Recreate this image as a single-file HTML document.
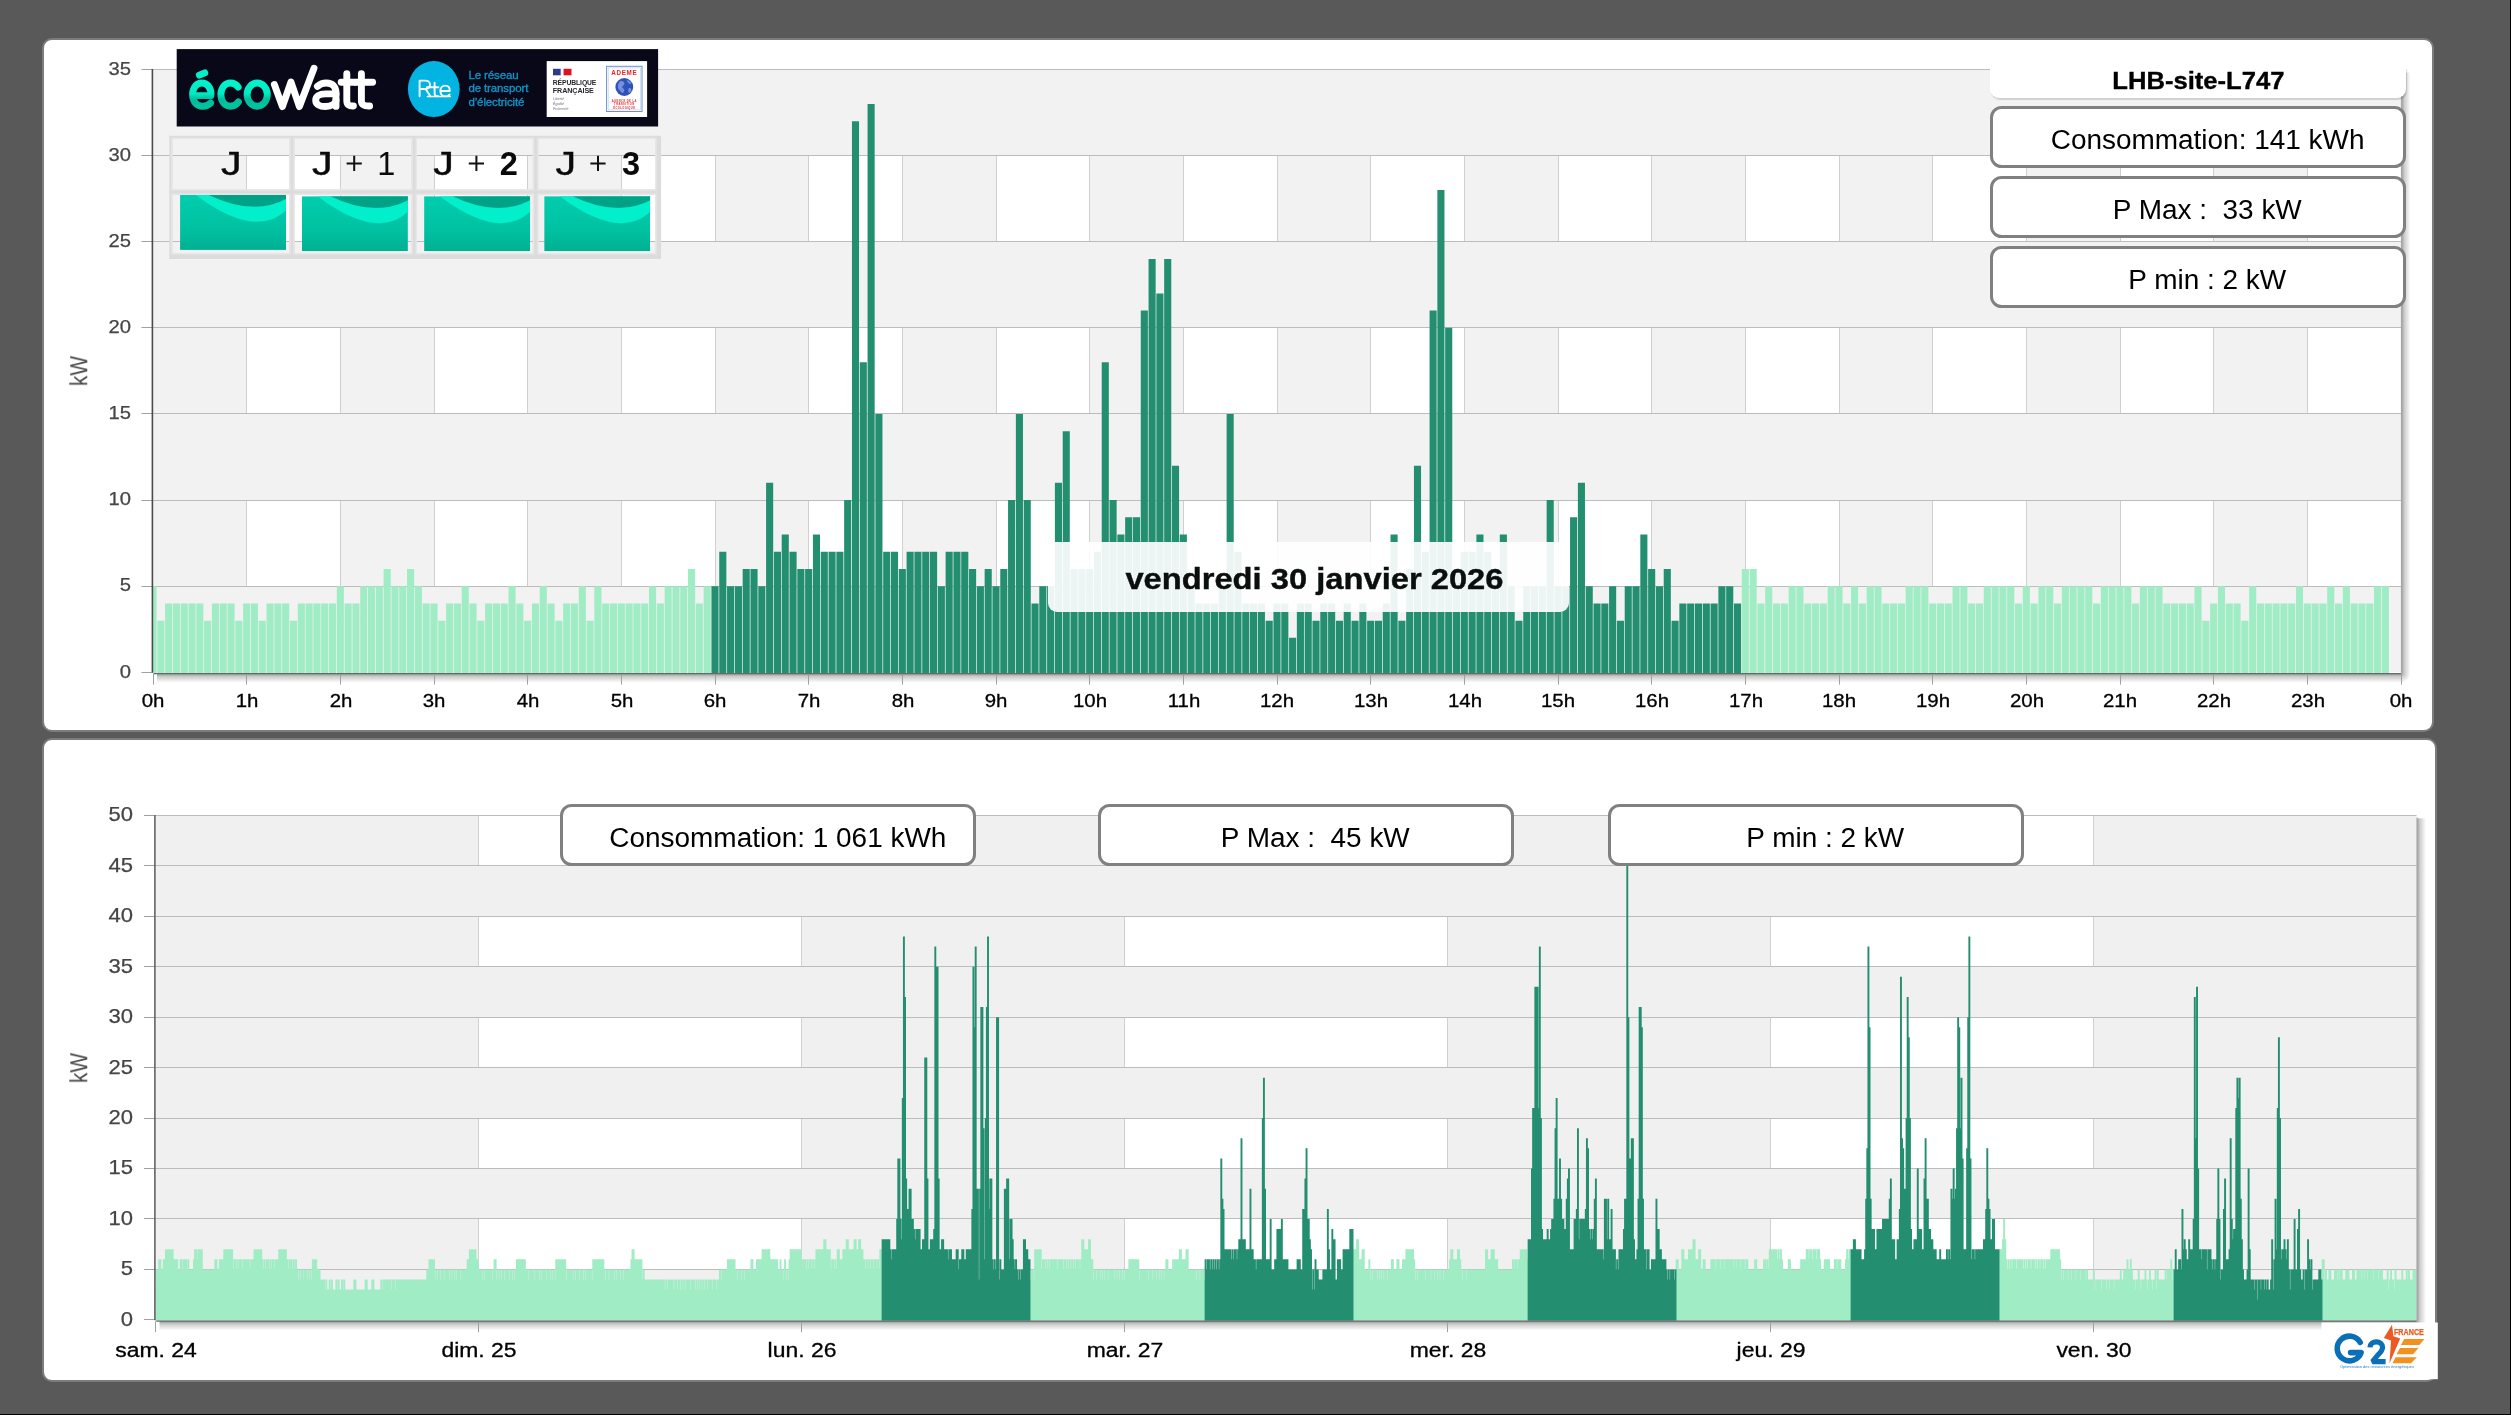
<!DOCTYPE html>
<html lang="fr"><head><meta charset="utf-8"><title>Consommation - LHB-site-L747</title>
<style>
html,body{margin:0;padding:0}
body{width:2511px;height:1415px;background:#595959;position:relative;overflow:hidden;font-family:"Liberation Sans", sans-serif}
.panel{position:absolute;background:#fff;border:2px solid #7c7c7c;border-radius:10px;box-sizing:border-box}
#p1{left:42px;top:37.7px;width:2391.9px;height:694px}
#p2{left:42px;top:737.8px;width:2395.3px;height:644.2px}
svg#c{position:absolute;left:0;top:0;will-change:transform}
.t{position:absolute;white-space:nowrap;line-height:1;font-family:"Liberation Sans", sans-serif;will-change:transform}
.box span,#title span,#date span{will-change:transform}
.box{position:absolute;box-sizing:border-box;border:3.4px solid #808080;border-radius:11.5px;background:#fff;width:416px;height:62px;
 font-size:27px;line-height:62px;text-align:center;color:#000;white-space:nowrap;padding-left:19px}
.box span{display:inline-block;transform:scaleX(1.035)}
#title{position:absolute;left:1990px;top:67.5px;width:416.3px;height:30px;background:#fff;border-radius:0 0 9px 9px;box-shadow:1px 1.2px 1.2px rgba(0,0,0,.14);
 font-weight:bold;font-size:24.5px;line-height:25px;text-align:center;color:#000}
#title span{display:inline-block;transform:scaleX(1.045);-webkit-text-stroke:.35px #000}
#date{position:absolute;left:1048px;top:542px;width:521px;height:70px;background:rgba(255,255,255,.915);border-radius:0 0 9px 9px;
 font-weight:bold;font-size:30px;line-height:73px;text-align:center;color:#0a0f0e;box-sizing:border-box;padding-left:11px}
#date span{display:inline-block;transform:scaleX(1.09);-webkit-text-stroke:.4px #0a0f0e}
#edge-r{position:absolute;right:0;top:0;width:1px;height:100%;background:#000}
#edge-b{position:absolute;left:0;bottom:0;width:100%;height:1px;background:#000}
#g2e{position:absolute;left:2321.5px;top:1322.5px;width:116.3px;height:56.7px;background:#fff}
</style></head><body>
<div class="panel" id="p1"></div>
<div class="panel" id="p2"></div>
<svg id="c" width="2511" height="1415" viewBox="0 0 2511 1415">
<defs><linearGradient id="shR" x1="0" x2="1" y1="0" y2="0"><stop offset="0" stop-color="#000" stop-opacity=".42"/><stop offset=".35" stop-color="#000" stop-opacity=".2"/><stop offset="1" stop-color="#000" stop-opacity="0"/></linearGradient><linearGradient id="shB" x1="0" x2="0" y1="0" y2="1"><stop offset="0" stop-color="#000" stop-opacity=".42"/><stop offset=".35" stop-color="#000" stop-opacity=".2"/><stop offset="1" stop-color="#000" stop-opacity="0"/></linearGradient><linearGradient id="eco" x1="0" x2="0" y1="0" y2="1"><stop offset="0" stop-color="#02f2cb"/><stop offset=".45" stop-color="#00ebc4"/><stop offset=".7" stop-color="#00bd9b"/><stop offset="1" stop-color="#00c4a0"/></linearGradient><linearGradient id="wave" x1="0" x2="0" y1="0" y2="1"><stop offset="0" stop-color="#00cdae"/><stop offset=".6" stop-color="#00c2a2"/><stop offset="1" stop-color="#00b092"/></linearGradient><radialGradient id="shC" cx="0" cy="0" r="1"><stop offset="0" stop-color="#000" stop-opacity=".42"/><stop offset=".35" stop-color="#000" stop-opacity=".2"/><stop offset="1" stop-color="#000" stop-opacity="0"/></radialGradient><clipPath id="cw"><rect x="0" y="0" width="106" height="55"/></clipPath></defs>
<rect x="2401" y="72.5" width="9.5" height="600.8" fill="url(#shR)"/>
<rect x="157" y="673.3" width="2244" height="9.5" fill="url(#shB)"/>
<path d="M2401 673.3h9.5v9.5h-9.5z" fill="url(#shC)"/>
<rect x="153" y="69.5" width="2248" height="602.8" fill="#fff"/>
<rect x="153" y="69.5" width="2248" height="86.11" fill="#f2f2f2"/>
<rect x="153" y="155.61" width="93.67" height="86.11" fill="#f2f2f2"/>
<rect x="340.33" y="155.61" width="93.67" height="86.11" fill="#f2f2f2"/>
<rect x="527.67" y="155.61" width="93.67" height="86.11" fill="#f2f2f2"/>
<rect x="715" y="155.61" width="93.67" height="86.11" fill="#f2f2f2"/>
<rect x="902.33" y="155.61" width="93.67" height="86.11" fill="#f2f2f2"/>
<rect x="1089.67" y="155.61" width="93.67" height="86.11" fill="#f2f2f2"/>
<rect x="1277" y="155.61" width="93.67" height="86.11" fill="#f2f2f2"/>
<rect x="1464.33" y="155.61" width="93.67" height="86.11" fill="#f2f2f2"/>
<rect x="1651.67" y="155.61" width="93.67" height="86.11" fill="#f2f2f2"/>
<rect x="1839" y="155.61" width="93.67" height="86.11" fill="#f2f2f2"/>
<rect x="2026.33" y="155.61" width="93.67" height="86.11" fill="#f2f2f2"/>
<rect x="2213.67" y="155.61" width="93.67" height="86.11" fill="#f2f2f2"/>
<rect x="153" y="241.73" width="2248" height="86.11" fill="#f2f2f2"/>
<rect x="153" y="327.84" width="93.67" height="86.11" fill="#f2f2f2"/>
<rect x="340.33" y="327.84" width="93.67" height="86.11" fill="#f2f2f2"/>
<rect x="527.67" y="327.84" width="93.67" height="86.11" fill="#f2f2f2"/>
<rect x="715" y="327.84" width="93.67" height="86.11" fill="#f2f2f2"/>
<rect x="902.33" y="327.84" width="93.67" height="86.11" fill="#f2f2f2"/>
<rect x="1089.67" y="327.84" width="93.67" height="86.11" fill="#f2f2f2"/>
<rect x="1277" y="327.84" width="93.67" height="86.11" fill="#f2f2f2"/>
<rect x="1464.33" y="327.84" width="93.67" height="86.11" fill="#f2f2f2"/>
<rect x="1651.67" y="327.84" width="93.67" height="86.11" fill="#f2f2f2"/>
<rect x="1839" y="327.84" width="93.67" height="86.11" fill="#f2f2f2"/>
<rect x="2026.33" y="327.84" width="93.67" height="86.11" fill="#f2f2f2"/>
<rect x="2213.67" y="327.84" width="93.67" height="86.11" fill="#f2f2f2"/>
<rect x="153" y="413.96" width="2248" height="86.11" fill="#f2f2f2"/>
<rect x="153" y="500.07" width="93.67" height="86.11" fill="#f2f2f2"/>
<rect x="340.33" y="500.07" width="93.67" height="86.11" fill="#f2f2f2"/>
<rect x="527.67" y="500.07" width="93.67" height="86.11" fill="#f2f2f2"/>
<rect x="715" y="500.07" width="93.67" height="86.11" fill="#f2f2f2"/>
<rect x="902.33" y="500.07" width="93.67" height="86.11" fill="#f2f2f2"/>
<rect x="1089.67" y="500.07" width="93.67" height="86.11" fill="#f2f2f2"/>
<rect x="1277" y="500.07" width="93.67" height="86.11" fill="#f2f2f2"/>
<rect x="1464.33" y="500.07" width="93.67" height="86.11" fill="#f2f2f2"/>
<rect x="1651.67" y="500.07" width="93.67" height="86.11" fill="#f2f2f2"/>
<rect x="1839" y="500.07" width="93.67" height="86.11" fill="#f2f2f2"/>
<rect x="2026.33" y="500.07" width="93.67" height="86.11" fill="#f2f2f2"/>
<rect x="2213.67" y="500.07" width="93.67" height="86.11" fill="#f2f2f2"/>
<rect x="153" y="586.19" width="2248" height="86.11" fill="#f2f2f2"/>
<path d="M246.5 155.61V241.73M340.5 155.61V241.73M434.5 155.61V241.73M527.5 155.61V241.73M621.5 155.61V241.73M715.5 155.61V241.73M808.5 155.61V241.73M902.5 155.61V241.73M996.5 155.61V241.73M1089.5 155.61V241.73M1183.5 155.61V241.73M1277.5 155.61V241.73M1370.5 155.61V241.73M1464.5 155.61V241.73M1558.5 155.61V241.73M1651.5 155.61V241.73M1745.5 155.61V241.73M1839.5 155.61V241.73M1932.5 155.61V241.73M2026.5 155.61V241.73M2120.5 155.61V241.73M2213.5 155.61V241.73M2307.5 155.61V241.73M246.5 327.84V413.96M340.5 327.84V413.96M434.5 327.84V413.96M527.5 327.84V413.96M621.5 327.84V413.96M715.5 327.84V413.96M808.5 327.84V413.96M902.5 327.84V413.96M996.5 327.84V413.96M1089.5 327.84V413.96M1183.5 327.84V413.96M1277.5 327.84V413.96M1370.5 327.84V413.96M1464.5 327.84V413.96M1558.5 327.84V413.96M1651.5 327.84V413.96M1745.5 327.84V413.96M1839.5 327.84V413.96M1932.5 327.84V413.96M2026.5 327.84V413.96M2120.5 327.84V413.96M2213.5 327.84V413.96M2307.5 327.84V413.96M246.5 500.07V586.19M340.5 500.07V586.19M434.5 500.07V586.19M527.5 500.07V586.19M621.5 500.07V586.19M715.5 500.07V586.19M808.5 500.07V586.19M902.5 500.07V586.19M996.5 500.07V586.19M1089.5 500.07V586.19M1183.5 500.07V586.19M1277.5 500.07V586.19M1370.5 500.07V586.19M1464.5 500.07V586.19M1558.5 500.07V586.19M1651.5 500.07V586.19M1745.5 500.07V586.19M1839.5 500.07V586.19M1932.5 500.07V586.19M2026.5 500.07V586.19M2120.5 500.07V586.19M2213.5 500.07V586.19M2307.5 500.07V586.19" stroke="#d0d0d0" stroke-width="1" fill="none"/>
<path d="M153 69.5H2401M153 155.5H2401M153 241.5H2401M153 327.5H2401M153 413.5H2401M153 500.5H2401M153 586.5H2401" stroke="#bcbcbc" stroke-width="1" fill="none"/>
<path d="M153 673.1V586.19H156.55V673.1ZM157.26 673.1V620.63H164.36V673.1ZM165.06 673.1V603.41H172.16V673.1ZM172.87 673.1V603.41H179.97V673.1ZM180.67 673.1V603.41H187.77V673.1ZM188.48 673.1V603.41H195.58V673.1ZM196.28 673.1V603.41H203.38V673.1ZM204.09 673.1V620.63H211.19V673.1ZM211.89 673.1V603.41H218.99V673.1ZM219.7 673.1V603.41H226.8V673.1ZM227.51 673.1V603.41H234.61V673.1ZM235.31 673.1V620.63H242.41V673.1ZM243.12 673.1V603.41H250.22V673.1ZM250.92 673.1V603.41H258.02V673.1ZM258.73 673.1V620.63H265.83V673.1ZM266.53 673.1V603.41H273.63V673.1ZM274.34 673.1V603.41H281.44V673.1ZM282.14 673.1V603.41H289.24V673.1ZM289.95 673.1V620.63H297.05V673.1ZM297.76 673.1V603.41H304.86V673.1ZM305.56 673.1V603.41H312.66V673.1ZM313.37 673.1V603.41H320.47V673.1ZM321.17 673.1V603.41H328.27V673.1ZM328.98 673.1V603.41H336.08V673.1ZM336.78 673.1V586.19H343.88V673.1ZM344.59 673.1V603.41H351.69V673.1ZM352.39 673.1V603.41H359.49V673.1ZM360.2 673.1V586.19H367.3V673.1ZM368.01 673.1V586.19H375.11V673.1ZM375.81 673.1V586.19H382.91V673.1ZM383.62 673.1V568.96H390.72V673.1ZM391.42 673.1V586.19H398.52V673.1ZM399.23 673.1V586.19H406.33V673.1ZM407.03 673.1V568.96H414.13V673.1ZM414.84 673.1V586.19H421.94V673.1ZM422.64 673.1V603.41H429.74V673.1ZM430.45 673.1V603.41H437.55V673.1ZM438.26 673.1V620.63H445.36V673.1ZM446.06 673.1V603.41H453.16V673.1ZM453.87 673.1V603.41H460.97V673.1ZM461.67 673.1V586.19H468.77V673.1ZM469.48 673.1V603.41H476.58V673.1ZM477.28 673.1V620.63H484.38V673.1ZM485.09 673.1V603.41H492.19V673.1ZM492.89 673.1V603.41H499.99V673.1ZM500.7 673.1V603.41H507.8V673.1ZM508.51 673.1V586.19H515.61V673.1ZM516.31 673.1V603.41H523.41V673.1ZM524.12 673.1V620.63H531.22V673.1ZM531.92 673.1V603.41H539.02V673.1ZM539.73 673.1V586.19H546.83V673.1ZM547.53 673.1V603.41H554.63V673.1ZM555.34 673.1V620.63H562.44V673.1ZM563.14 673.1V603.41H570.24V673.1ZM570.95 673.1V603.41H578.05V673.1ZM578.76 673.1V586.19H585.86V673.1ZM586.56 673.1V620.63H593.66V673.1ZM594.37 673.1V586.19H601.47V673.1ZM602.17 673.1V603.41H609.27V673.1ZM609.98 673.1V603.41H617.08V673.1ZM617.78 673.1V603.41H624.88V673.1ZM625.59 673.1V603.41H632.69V673.1ZM633.39 673.1V603.41H640.49V673.1ZM641.2 673.1V603.41H648.3V673.1ZM649.01 673.1V586.19H656.11V673.1ZM656.81 673.1V603.41H663.91V673.1ZM664.62 673.1V586.19H671.72V673.1ZM672.42 673.1V586.19H679.52V673.1ZM680.23 673.1V586.19H687.33V673.1ZM688.03 673.1V568.96H695.13V673.1ZM695.84 673.1V603.41H702.94V673.1ZM703.64 673.1V586.19H710.74V673.1ZM1741.78 673.1V568.96H1748.88V673.1ZM1749.59 673.1V568.96H1756.69V673.1ZM1757.39 673.1V603.41H1764.49V673.1ZM1765.2 673.1V586.19H1772.3V673.1ZM1773.01 673.1V603.41H1780.11V673.1ZM1780.81 673.1V603.41H1787.91V673.1ZM1788.62 673.1V586.19H1795.72V673.1ZM1796.42 673.1V586.19H1803.52V673.1ZM1804.23 673.1V603.41H1811.33V673.1ZM1812.03 673.1V603.41H1819.13V673.1ZM1819.84 673.1V603.41H1826.94V673.1ZM1827.64 673.1V586.19H1834.74V673.1ZM1835.45 673.1V586.19H1842.55V673.1ZM1843.26 673.1V603.41H1850.36V673.1ZM1851.06 673.1V586.19H1858.16V673.1ZM1858.87 673.1V603.41H1865.97V673.1ZM1866.67 673.1V586.19H1873.77V673.1ZM1874.48 673.1V586.19H1881.58V673.1ZM1882.28 673.1V603.41H1889.38V673.1ZM1890.09 673.1V603.41H1897.19V673.1ZM1897.89 673.1V603.41H1904.99V673.1ZM1905.7 673.1V586.19H1912.8V673.1ZM1913.51 673.1V586.19H1920.61V673.1ZM1921.31 673.1V586.19H1928.41V673.1ZM1929.12 673.1V603.41H1936.22V673.1ZM1936.92 673.1V603.41H1944.02V673.1ZM1944.73 673.1V603.41H1951.83V673.1ZM1952.53 673.1V586.19H1959.63V673.1ZM1960.34 673.1V586.19H1967.44V673.1ZM1968.14 673.1V603.41H1975.24V673.1ZM1975.95 673.1V603.41H1983.05V673.1ZM1983.76 673.1V586.19H1990.86V673.1ZM1991.56 673.1V586.19H1998.66V673.1ZM1999.37 673.1V586.19H2006.47V673.1ZM2007.17 673.1V586.19H2014.27V673.1ZM2014.98 673.1V603.41H2022.08V673.1ZM2022.78 673.1V586.19H2029.88V673.1ZM2030.59 673.1V603.41H2037.69V673.1ZM2038.39 673.1V586.19H2045.49V673.1ZM2046.2 673.1V586.19H2053.3V673.1ZM2054.01 673.1V603.41H2061.11V673.1ZM2061.81 673.1V586.19H2068.91V673.1ZM2069.62 673.1V586.19H2076.72V673.1ZM2077.42 673.1V586.19H2084.52V673.1ZM2085.23 673.1V586.19H2092.33V673.1ZM2093.03 673.1V603.41H2100.13V673.1ZM2100.84 673.1V586.19H2107.94V673.1ZM2108.64 673.1V586.19H2115.74V673.1ZM2116.45 673.1V586.19H2123.55V673.1ZM2124.26 673.1V586.19H2131.36V673.1ZM2132.06 673.1V603.41H2139.16V673.1ZM2139.87 673.1V586.19H2146.97V673.1ZM2147.67 673.1V586.19H2154.77V673.1ZM2155.48 673.1V586.19H2162.58V673.1ZM2163.28 673.1V603.41H2170.38V673.1ZM2171.09 673.1V603.41H2178.19V673.1ZM2178.89 673.1V603.41H2185.99V673.1ZM2186.7 673.1V603.41H2193.8V673.1ZM2194.51 673.1V586.19H2201.61V673.1ZM2202.31 673.1V620.63H2209.41V673.1ZM2210.12 673.1V603.41H2217.22V673.1ZM2217.92 673.1V586.19H2225.02V673.1ZM2225.73 673.1V603.41H2232.83V673.1ZM2233.53 673.1V603.41H2240.63V673.1ZM2241.34 673.1V620.63H2248.44V673.1ZM2249.14 673.1V586.19H2256.24V673.1ZM2256.95 673.1V603.41H2264.05V673.1ZM2264.76 673.1V603.41H2271.86V673.1ZM2272.56 673.1V603.41H2279.66V673.1ZM2280.37 673.1V603.41H2287.47V673.1ZM2288.17 673.1V603.41H2295.27V673.1ZM2295.98 673.1V586.19H2303.08V673.1ZM2303.78 673.1V603.41H2310.88V673.1ZM2311.59 673.1V603.41H2318.69V673.1ZM2319.39 673.1V603.41H2326.49V673.1ZM2327.2 673.1V586.19H2334.3V673.1ZM2335.01 673.1V603.41H2342.11V673.1ZM2342.81 673.1V586.19H2349.91V673.1ZM2350.62 673.1V603.41H2357.72V673.1ZM2358.42 673.1V603.41H2365.52V673.1ZM2366.23 673.1V603.41H2373.33V673.1ZM2374.03 673.1V586.19H2381.13V673.1ZM2381.84 673.1V586.19H2388.94V673.1Z" fill="#a0ecc5"/>
<path d="M711.45 673.1V586.19H718.55V673.1ZM719.26 673.1V551.74H726.36V673.1ZM727.06 673.1V586.19H734.16V673.1ZM734.87 673.1V586.19H741.97V673.1ZM742.67 673.1V568.96H749.77V673.1ZM750.48 673.1V568.96H757.58V673.1ZM758.28 673.1V586.19H765.38V673.1ZM766.09 673.1V482.85H773.19V673.1ZM773.89 673.1V551.74H780.99V673.1ZM781.7 673.1V534.52H788.8V673.1ZM789.51 673.1V551.74H796.61V673.1ZM797.31 673.1V568.96H804.41V673.1ZM805.12 673.1V568.96H812.22V673.1ZM812.92 673.1V534.52H820.02V673.1ZM820.73 673.1V551.74H827.83V673.1ZM828.53 673.1V551.74H835.63V673.1ZM836.34 673.1V551.74H843.44V673.1ZM844.14 673.1V500.07H851.24V673.1ZM851.95 673.1V121.17H859.05V673.1ZM859.76 673.1V362.29H866.86V673.1ZM867.56 673.1V103.95H874.66V673.1ZM875.37 673.1V413.96H882.47V673.1ZM883.17 673.1V551.74H890.27V673.1ZM890.98 673.1V551.74H898.08V673.1ZM898.78 673.1V568.96H905.88V673.1ZM906.59 673.1V551.74H913.69V673.1ZM914.39 673.1V551.74H921.49V673.1ZM922.2 673.1V551.74H929.3V673.1ZM930.01 673.1V551.74H937.11V673.1ZM937.81 673.1V586.19H944.91V673.1ZM945.62 673.1V551.74H952.72V673.1ZM953.42 673.1V551.74H960.52V673.1ZM961.23 673.1V551.74H968.33V673.1ZM969.03 673.1V568.96H976.13V673.1ZM976.84 673.1V586.19H983.94V673.1ZM984.64 673.1V568.96H991.74V673.1ZM992.45 673.1V586.19H999.55V673.1ZM1000.26 673.1V568.96H1007.36V673.1ZM1008.06 673.1V500.07H1015.16V673.1ZM1015.87 673.1V413.96H1022.97V673.1ZM1023.67 673.1V500.07H1030.77V673.1ZM1031.48 673.1V603.41H1038.58V673.1ZM1039.28 673.1V586.19H1046.38V673.1ZM1047.09 673.1V586.19H1054.19V673.1ZM1054.89 673.1V482.85H1061.99V673.1ZM1062.7 673.1V431.18H1069.8V673.1ZM1070.51 673.1V568.96H1077.61V673.1ZM1078.31 673.1V568.96H1085.41V673.1ZM1086.12 673.1V568.96H1093.22V673.1ZM1093.92 673.1V551.74H1101.02V673.1ZM1101.73 673.1V362.29H1108.83V673.1ZM1109.53 673.1V500.07H1116.63V673.1ZM1117.34 673.1V534.52H1124.44V673.1ZM1125.14 673.1V517.29H1132.24V673.1ZM1132.95 673.1V517.29H1140.05V673.1ZM1140.76 673.1V310.62H1147.86V673.1ZM1148.56 673.1V258.95H1155.66V673.1ZM1156.37 673.1V293.4H1163.47V673.1ZM1164.17 673.1V258.95H1171.27V673.1ZM1171.98 673.1V465.63H1179.08V673.1ZM1179.78 673.1V534.52H1186.88V673.1ZM1187.59 673.1V586.19H1194.69V673.1ZM1195.39 673.1V603.41H1202.49V673.1ZM1203.2 673.1V603.41H1210.3V673.1ZM1211.01 673.1V603.41H1218.11V673.1ZM1218.81 673.1V586.19H1225.91V673.1ZM1226.62 673.1V413.96H1233.72V673.1ZM1234.42 673.1V551.74H1241.52V673.1ZM1242.23 673.1V603.41H1249.33V673.1ZM1250.03 673.1V603.41H1257.13V673.1ZM1257.84 673.1V603.41H1264.94V673.1ZM1265.64 673.1V620.63H1272.74V673.1ZM1273.45 673.1V603.41H1280.55V673.1ZM1281.26 673.1V603.41H1288.36V673.1ZM1289.06 673.1V637.85H1296.16V673.1ZM1296.87 673.1V603.41H1303.97V673.1ZM1304.67 673.1V603.41H1311.77V673.1ZM1312.48 673.1V620.63H1319.58V673.1ZM1320.28 673.1V603.41H1327.38V673.1ZM1328.09 673.1V603.41H1335.19V673.1ZM1335.89 673.1V620.63H1342.99V673.1ZM1343.7 673.1V603.41H1350.8V673.1ZM1351.51 673.1V620.63H1358.61V673.1ZM1359.31 673.1V603.41H1366.41V673.1ZM1367.12 673.1V620.63H1374.22V673.1ZM1374.92 673.1V620.63H1382.02V673.1ZM1382.73 673.1V603.41H1389.83V673.1ZM1390.53 673.1V534.52H1397.63V673.1ZM1398.34 673.1V620.63H1405.44V673.1ZM1406.14 673.1V568.96H1413.24V673.1ZM1413.95 673.1V465.63H1421.05V673.1ZM1421.76 673.1V551.74H1428.86V673.1ZM1429.56 673.1V310.62H1436.66V673.1ZM1437.37 673.1V190.06H1444.47V673.1ZM1445.17 673.1V327.84H1452.27V673.1ZM1452.98 673.1V568.96H1460.08V673.1ZM1460.78 673.1V551.74H1467.88V673.1ZM1468.59 673.1V551.74H1475.69V673.1ZM1476.39 673.1V534.52H1483.49V673.1ZM1484.2 673.1V551.74H1491.3V673.1ZM1492.01 673.1V568.96H1499.11V673.1ZM1499.81 673.1V534.52H1506.91V673.1ZM1507.62 673.1V586.19H1514.72V673.1ZM1515.42 673.1V620.63H1522.52V673.1ZM1523.23 673.1V586.19H1530.33V673.1ZM1531.03 673.1V586.19H1538.13V673.1ZM1538.84 673.1V586.19H1545.94V673.1ZM1546.64 673.1V500.07H1553.74V673.1ZM1554.45 673.1V586.19H1561.55V673.1ZM1562.26 673.1V586.19H1569.36V673.1ZM1570.06 673.1V517.29H1577.16V673.1ZM1577.87 673.1V482.85H1584.97V673.1ZM1585.67 673.1V586.19H1592.77V673.1ZM1593.48 673.1V603.41H1600.58V673.1ZM1601.28 673.1V603.41H1608.38V673.1ZM1609.09 673.1V586.19H1616.19V673.1ZM1616.89 673.1V620.63H1623.99V673.1ZM1624.7 673.1V586.19H1631.8V673.1ZM1632.51 673.1V586.19H1639.61V673.1ZM1640.31 673.1V534.52H1647.41V673.1ZM1648.12 673.1V568.96H1655.22V673.1ZM1655.92 673.1V586.19H1663.02V673.1ZM1663.73 673.1V568.96H1670.83V673.1ZM1671.53 673.1V620.63H1678.63V673.1ZM1679.34 673.1V603.41H1686.44V673.1ZM1687.14 673.1V603.41H1694.24V673.1ZM1694.95 673.1V603.41H1702.05V673.1ZM1702.76 673.1V603.41H1709.86V673.1ZM1710.56 673.1V603.41H1717.66V673.1ZM1718.37 673.1V586.19H1725.47V673.1ZM1726.17 673.1V586.19H1733.27V673.1ZM1733.98 673.1V603.41H1741.08V673.1Z" fill="#238f70"/>
<path d="M141.5 69.5H153M141.5 155.5H153M141.5 241.5H153M141.5 327.5H153M141.5 413.5H153M141.5 500.5H153M141.5 586.5H153M141.5 672.5H153M153.5 673.8V684.6M246.5 673.8V684.6M340.5 673.8V684.6M434.5 673.8V684.6M527.5 673.8V684.6M621.5 673.8V684.6M715.5 673.8V684.6M808.5 673.8V684.6M902.5 673.8V684.6M996.5 673.8V684.6M1089.5 673.8V684.6M1183.5 673.8V684.6M1277.5 673.8V684.6M1370.5 673.8V684.6M1464.5 673.8V684.6M1558.5 673.8V684.6M1651.5 673.8V684.6M1745.5 673.8V684.6M1839.5 673.8V684.6M1932.5 673.8V684.6M2026.5 673.8V684.6M2120.5 673.8V684.6M2213.5 673.8V684.6M2307.5 673.8V684.6M2401.5 673.8V684.6" stroke="#a0a0a0" stroke-width="1" fill="none"/>
<path d="M153.6 673.6H2401" stroke="#6a6a6a" stroke-width="1.25" fill="none"/>
<path d="M2401.4 71.5V673.9" stroke="#a8a8a8" stroke-width=".9" fill="none"/>
<path d="M152.4 69.1V672.6" stroke="#4a4a4a" stroke-width="1.6" fill="none"/>
<rect x="2416.5" y="818.3" width="9.5" height="502.6" fill="url(#shR)"/>
<rect x="159.5" y="1320.9" width="2257" height="9.5" fill="url(#shB)"/>
<path d="M2416.5 1320.9h9.5v9.5h-9.5z" fill="url(#shC)"/>
<rect x="155.5" y="815.3" width="2261" height="504.6" fill="#fff"/>
<rect x="155.5" y="815.3" width="323" height="50.46" fill="#f0f0f0"/>
<rect x="801.5" y="815.3" width="323" height="50.46" fill="#f0f0f0"/>
<rect x="1447.5" y="815.3" width="323" height="50.46" fill="#f0f0f0"/>
<rect x="2093.5" y="815.3" width="323" height="50.46" fill="#f0f0f0"/>
<rect x="155.5" y="865.76" width="2261" height="50.46" fill="#f0f0f0"/>
<rect x="155.5" y="916.22" width="323" height="50.46" fill="#f0f0f0"/>
<rect x="801.5" y="916.22" width="323" height="50.46" fill="#f0f0f0"/>
<rect x="1447.5" y="916.22" width="323" height="50.46" fill="#f0f0f0"/>
<rect x="2093.5" y="916.22" width="323" height="50.46" fill="#f0f0f0"/>
<rect x="155.5" y="966.68" width="2261" height="50.46" fill="#f0f0f0"/>
<rect x="155.5" y="1017.14" width="323" height="50.46" fill="#f0f0f0"/>
<rect x="801.5" y="1017.14" width="323" height="50.46" fill="#f0f0f0"/>
<rect x="1447.5" y="1017.14" width="323" height="50.46" fill="#f0f0f0"/>
<rect x="2093.5" y="1017.14" width="323" height="50.46" fill="#f0f0f0"/>
<rect x="155.5" y="1067.6" width="2261" height="50.46" fill="#f0f0f0"/>
<rect x="155.5" y="1118.06" width="323" height="50.46" fill="#f0f0f0"/>
<rect x="801.5" y="1118.06" width="323" height="50.46" fill="#f0f0f0"/>
<rect x="1447.5" y="1118.06" width="323" height="50.46" fill="#f0f0f0"/>
<rect x="2093.5" y="1118.06" width="323" height="50.46" fill="#f0f0f0"/>
<rect x="155.5" y="1168.52" width="2261" height="50.46" fill="#f0f0f0"/>
<rect x="155.5" y="1218.98" width="323" height="50.46" fill="#f0f0f0"/>
<rect x="801.5" y="1218.98" width="323" height="50.46" fill="#f0f0f0"/>
<rect x="1447.5" y="1218.98" width="323" height="50.46" fill="#f0f0f0"/>
<rect x="2093.5" y="1218.98" width="323" height="50.46" fill="#f0f0f0"/>
<rect x="155.5" y="1269.44" width="2261" height="50.46" fill="#f0f0f0"/>
<path d="M478.5 815.3V865.76M801.5 815.3V865.76M1124.5 815.3V865.76M1447.5 815.3V865.76M1770.5 815.3V865.76M2093.5 815.3V865.76M478.5 916.22V966.68M801.5 916.22V966.68M1124.5 916.22V966.68M1447.5 916.22V966.68M1770.5 916.22V966.68M2093.5 916.22V966.68M478.5 1017.14V1067.6M801.5 1017.14V1067.6M1124.5 1017.14V1067.6M1447.5 1017.14V1067.6M1770.5 1017.14V1067.6M2093.5 1017.14V1067.6M478.5 1118.06V1168.52M801.5 1118.06V1168.52M1124.5 1118.06V1168.52M1447.5 1118.06V1168.52M1770.5 1118.06V1168.52M2093.5 1118.06V1168.52M478.5 1218.98V1269.44M801.5 1218.98V1269.44M1124.5 1218.98V1269.44M1447.5 1218.98V1269.44M1770.5 1218.98V1269.44M2093.5 1218.98V1269.44" stroke="#d0d0d0" stroke-width="1" fill="none"/>
<path d="M155.5 815.5H2416.5M155.5 865.5H2416.5M155.5 916.5H2416.5M155.5 966.5H2416.5M155.5 1017.5H2416.5M155.5 1067.5H2416.5M155.5 1118.5H2416.5M155.5 1168.5H2416.5M155.5 1218.5H2416.5M155.5 1269.5H2416.5" stroke="#bcbcbc" stroke-width="1" fill="none"/>
<path d="M155.5 1320.7V1269.44H156.81V1320.7ZM156.01 1320.7V1269.44H157.93V1320.7ZM157.13 1320.7V1269.44H159.05V1320.7ZM158.25 1320.7V1259.35H160.17V1320.7ZM159.38 1320.7V1259.35H161.3V1320.7ZM160.5 1320.7V1269.44H162.42V1320.7ZM161.62 1320.7V1269.44H163.54V1320.7ZM162.74 1320.7V1259.35H164.66V1320.7ZM163.86 1320.7V1259.35H165.78V1320.7ZM164.98 1320.7V1249.26H166.9V1320.7ZM166.11 1320.7V1249.26H168.03V1320.7ZM167.23 1320.7V1249.26H169.15V1320.7ZM168.35 1320.7V1249.26H170.27V1320.7ZM169.47 1320.7V1249.26H171.39V1320.7ZM170.59 1320.7V1249.26H172.51V1320.7ZM171.71 1320.7V1249.26H173.63V1320.7ZM172.83 1320.7V1259.35H174.75V1320.7ZM173.96 1320.7V1259.35H175.88V1320.7ZM175.08 1320.7V1259.35H177V1320.7ZM176.2 1320.7V1259.35H178.12V1320.7ZM177.32 1320.7V1269.44H179.24V1320.7ZM178.44 1320.7V1269.44H180.36V1320.7ZM179.56 1320.7V1259.35H181.48V1320.7ZM180.69 1320.7V1259.35H182.61V1320.7ZM181.81 1320.7V1269.44H183.73V1320.7ZM182.93 1320.7V1259.35H184.85V1320.7ZM184.05 1320.7V1259.35H185.97V1320.7ZM185.17 1320.7V1259.35H187.09V1320.7ZM186.29 1320.7V1269.44H188.21V1320.7ZM187.41 1320.7V1259.35H189.33V1320.7ZM188.54 1320.7V1269.44H190.46V1320.7ZM189.66 1320.7V1269.44H191.58V1320.7ZM190.78 1320.7V1269.44H192.7V1320.7ZM191.9 1320.7V1269.44H193.82V1320.7ZM193.02 1320.7V1259.35H194.94V1320.7ZM194.14 1320.7V1249.26H196.06V1320.7ZM195.26 1320.7V1249.26H197.19V1320.7ZM196.39 1320.7V1259.35H198.31V1320.7ZM197.51 1320.7V1249.26H199.43V1320.7ZM198.63 1320.7V1249.26H200.55V1320.7ZM199.75 1320.7V1249.26H201.67V1320.7ZM200.87 1320.7V1249.26H202.79V1320.7ZM201.99 1320.7V1269.44H203.91V1320.7ZM203.12 1320.7V1269.44H205.04V1320.7ZM204.24 1320.7V1269.44H206.16V1320.7ZM205.36 1320.7V1269.44H207.28V1320.7ZM206.48 1320.7V1269.44H208.4V1320.7ZM207.6 1320.7V1269.44H209.52V1320.7ZM208.72 1320.7V1269.44H210.64V1320.7ZM209.84 1320.7V1269.44H211.76V1320.7ZM210.97 1320.7V1269.44H212.89V1320.7ZM212.09 1320.7V1269.44H214.01V1320.7ZM213.21 1320.7V1269.44H215.13V1320.7ZM214.33 1320.7V1259.35H216.25V1320.7ZM215.45 1320.7V1259.35H217.37V1320.7ZM216.57 1320.7V1269.44H218.49V1320.7ZM217.7 1320.7V1269.44H219.62V1320.7ZM218.82 1320.7V1259.35H220.74V1320.7ZM219.94 1320.7V1259.35H221.86V1320.7ZM221.06 1320.7V1259.35H222.98V1320.7ZM222.18 1320.7V1259.35H224.1V1320.7ZM223.3 1320.7V1249.26H225.22V1320.7ZM224.42 1320.7V1249.26H226.34V1320.7ZM225.55 1320.7V1249.26H227.47V1320.7ZM226.67 1320.7V1249.26H228.59V1320.7ZM227.79 1320.7V1249.26H229.71V1320.7ZM228.91 1320.7V1249.26H230.83V1320.7ZM230.03 1320.7V1249.26H231.95V1320.7ZM231.15 1320.7V1249.26H233.07V1320.7ZM232.28 1320.7V1269.44H234.2V1320.7ZM233.4 1320.7V1259.35H235.32V1320.7ZM234.52 1320.7V1259.35H236.44V1320.7ZM235.64 1320.7V1269.44H237.56V1320.7ZM236.76 1320.7V1259.35H238.68V1320.7ZM237.88 1320.7V1269.44H239.8V1320.7ZM239 1320.7V1259.35H240.92V1320.7ZM240.13 1320.7V1259.35H242.05V1320.7ZM241.25 1320.7V1269.44H243.17V1320.7ZM242.37 1320.7V1259.35H244.29V1320.7ZM243.49 1320.7V1259.35H245.41V1320.7ZM244.61 1320.7V1259.35H246.53V1320.7ZM245.73 1320.7V1259.35H247.65V1320.7ZM246.86 1320.7V1259.35H248.78V1320.7ZM247.98 1320.7V1259.35H249.9V1320.7ZM249.1 1320.7V1269.44H251.02V1320.7ZM250.22 1320.7V1259.35H252.14V1320.7ZM251.34 1320.7V1259.35H253.26V1320.7ZM252.46 1320.7V1259.35H254.38V1320.7ZM253.58 1320.7V1249.26H255.5V1320.7ZM254.71 1320.7V1249.26H256.63V1320.7ZM255.83 1320.7V1249.26H257.75V1320.7ZM256.95 1320.7V1249.26H258.87V1320.7ZM258.07 1320.7V1249.26H259.99V1320.7ZM259.19 1320.7V1249.26H261.11V1320.7ZM260.31 1320.7V1249.26H262.23V1320.7ZM261.44 1320.7V1259.35H263.36V1320.7ZM262.56 1320.7V1269.44H264.48V1320.7ZM263.68 1320.7V1259.35H265.6V1320.7ZM264.8 1320.7V1269.44H266.72V1320.7ZM265.92 1320.7V1259.35H267.84V1320.7ZM267.04 1320.7V1259.35H268.96V1320.7ZM268.16 1320.7V1269.44H270.08V1320.7ZM269.29 1320.7V1259.35H271.21V1320.7ZM270.41 1320.7V1269.44H272.33V1320.7ZM271.53 1320.7V1259.35H273.45V1320.7ZM272.65 1320.7V1259.35H274.57V1320.7ZM273.77 1320.7V1269.44H275.69V1320.7ZM274.89 1320.7V1259.35H276.81V1320.7ZM276.01 1320.7V1259.35H277.93V1320.7ZM277.14 1320.7V1259.35H279.06V1320.7ZM278.26 1320.7V1249.26H280.18V1320.7ZM279.38 1320.7V1249.26H281.3V1320.7ZM280.5 1320.7V1249.26H282.42V1320.7ZM281.62 1320.7V1249.26H283.54V1320.7ZM282.74 1320.7V1249.26H284.66V1320.7ZM283.87 1320.7V1249.26H285.79V1320.7ZM284.99 1320.7V1249.26H286.91V1320.7ZM286.11 1320.7V1259.35H288.03V1320.7ZM287.23 1320.7V1269.44H289.15V1320.7ZM288.35 1320.7V1259.35H290.27V1320.7ZM289.47 1320.7V1259.35H291.39V1320.7ZM290.59 1320.7V1259.35H292.51V1320.7ZM291.72 1320.7V1269.44H293.64V1320.7ZM292.84 1320.7V1259.35H294.76V1320.7ZM293.96 1320.7V1269.44H295.88V1320.7ZM295.08 1320.7V1259.35H297V1320.7ZM296.2 1320.7V1269.44H298.12V1320.7ZM297.32 1320.7V1279.53H299.24V1320.7ZM298.45 1320.7V1269.44H300.37V1320.7ZM299.57 1320.7V1279.53H301.49V1320.7ZM300.69 1320.7V1269.44H302.61V1320.7ZM301.81 1320.7V1269.44H303.73V1320.7ZM302.93 1320.7V1279.53H304.85V1320.7ZM304.05 1320.7V1269.44H305.97V1320.7ZM305.17 1320.7V1269.44H307.09V1320.7ZM306.3 1320.7V1279.53H308.22V1320.7ZM307.42 1320.7V1269.44H309.34V1320.7ZM308.54 1320.7V1279.53H310.46V1320.7ZM309.66 1320.7V1269.44H311.58V1320.7ZM310.78 1320.7V1279.53H312.7V1320.7ZM311.9 1320.7V1259.35H313.82V1320.7ZM313.03 1320.7V1259.35H314.95V1320.7ZM314.15 1320.7V1259.35H316.07V1320.7ZM315.27 1320.7V1259.35H317.19V1320.7ZM316.39 1320.7V1269.44H318.31V1320.7ZM317.51 1320.7V1269.44H319.43V1320.7ZM318.63 1320.7V1269.44H320.55V1320.7ZM319.75 1320.7V1279.53H321.67V1320.7ZM320.88 1320.7V1279.53H322.8V1320.7ZM322 1320.7V1279.53H323.92V1320.7ZM323.12 1320.7V1279.53H325.04V1320.7ZM324.24 1320.7V1289.62H326.16V1320.7ZM325.36 1320.7V1279.53H327.28V1320.7ZM326.48 1320.7V1289.62H328.4V1320.7ZM327.61 1320.7V1289.62H329.53V1320.7ZM328.73 1320.7V1279.53H330.65V1320.7ZM329.85 1320.7V1289.62H331.77V1320.7ZM330.97 1320.7V1279.53H332.89V1320.7ZM332.09 1320.7V1289.62H334.01V1320.7ZM333.21 1320.7V1289.62H335.13V1320.7ZM334.33 1320.7V1289.62H336.25V1320.7ZM335.46 1320.7V1279.53H337.38V1320.7ZM336.58 1320.7V1289.62H338.5V1320.7ZM337.7 1320.7V1279.53H339.62V1320.7ZM338.82 1320.7V1289.62H340.74V1320.7ZM339.94 1320.7V1289.62H341.86V1320.7ZM341.06 1320.7V1279.53H342.98V1320.7ZM342.19 1320.7V1289.62H344.11V1320.7ZM343.31 1320.7V1279.53H345.23V1320.7ZM344.43 1320.7V1289.62H346.35V1320.7ZM345.55 1320.7V1289.62H347.47V1320.7ZM346.67 1320.7V1289.62H348.59V1320.7ZM347.79 1320.7V1289.62H349.71V1320.7ZM348.91 1320.7V1289.62H350.83V1320.7ZM350.04 1320.7V1289.62H351.96V1320.7ZM351.16 1320.7V1289.62H353.08V1320.7ZM352.28 1320.7V1289.62H354.2V1320.7ZM353.4 1320.7V1279.53H355.32V1320.7ZM354.52 1320.7V1279.53H356.44V1320.7ZM355.64 1320.7V1289.62H357.56V1320.7ZM356.76 1320.7V1289.62H358.68V1320.7ZM357.89 1320.7V1289.62H359.81V1320.7ZM359.01 1320.7V1289.62H360.93V1320.7ZM360.13 1320.7V1289.62H362.05V1320.7ZM361.25 1320.7V1289.62H363.17V1320.7ZM362.37 1320.7V1289.62H364.29V1320.7ZM363.49 1320.7V1289.62H365.41V1320.7ZM364.62 1320.7V1279.53H366.54V1320.7ZM365.74 1320.7V1279.53H367.66V1320.7ZM366.86 1320.7V1289.62H368.78V1320.7ZM367.98 1320.7V1289.62H369.9V1320.7ZM369.1 1320.7V1289.62H371.02V1320.7ZM370.22 1320.7V1289.62H372.14V1320.7ZM371.34 1320.7V1279.53H373.26V1320.7ZM372.47 1320.7V1279.53H374.39V1320.7ZM373.59 1320.7V1289.62H375.51V1320.7ZM374.71 1320.7V1289.62H376.63V1320.7ZM375.83 1320.7V1289.62H377.75V1320.7ZM376.95 1320.7V1289.62H378.87V1320.7ZM378.07 1320.7V1289.62H379.99V1320.7ZM379.2 1320.7V1289.62H381.12V1320.7ZM380.32 1320.7V1279.53H382.24V1320.7ZM381.44 1320.7V1289.62H383.36V1320.7ZM382.56 1320.7V1279.53H384.48V1320.7ZM383.68 1320.7V1279.53H385.6V1320.7ZM384.8 1320.7V1279.53H386.72V1320.7ZM385.92 1320.7V1279.53H387.84V1320.7ZM387.05 1320.7V1279.53H388.97V1320.7ZM388.17 1320.7V1279.53H390.09V1320.7ZM389.29 1320.7V1279.53H391.21V1320.7ZM390.41 1320.7V1289.62H392.33V1320.7ZM391.53 1320.7V1279.53H393.45V1320.7ZM392.65 1320.7V1279.53H394.57V1320.7ZM393.78 1320.7V1279.53H395.7V1320.7ZM394.9 1320.7V1289.62H396.82V1320.7ZM396.02 1320.7V1279.53H397.94V1320.7ZM397.14 1320.7V1279.53H399.06V1320.7ZM398.26 1320.7V1279.53H400.18V1320.7ZM399.38 1320.7V1279.53H401.3V1320.7ZM400.5 1320.7V1279.53H402.42V1320.7ZM401.63 1320.7V1279.53H403.55V1320.7ZM402.75 1320.7V1279.53H404.67V1320.7ZM403.87 1320.7V1279.53H405.79V1320.7ZM404.99 1320.7V1279.53H406.91V1320.7ZM406.11 1320.7V1279.53H408.03V1320.7ZM407.23 1320.7V1279.53H409.15V1320.7ZM408.36 1320.7V1279.53H410.28V1320.7ZM409.48 1320.7V1279.53H411.4V1320.7ZM410.6 1320.7V1279.53H412.52V1320.7ZM411.72 1320.7V1279.53H413.64V1320.7ZM412.84 1320.7V1279.53H414.76V1320.7ZM413.96 1320.7V1279.53H415.88V1320.7ZM415.08 1320.7V1279.53H417V1320.7ZM416.21 1320.7V1279.53H418.13V1320.7ZM417.33 1320.7V1279.53H419.25V1320.7ZM418.45 1320.7V1279.53H420.37V1320.7ZM419.57 1320.7V1279.53H421.49V1320.7ZM420.69 1320.7V1279.53H422.61V1320.7ZM421.81 1320.7V1279.53H423.73V1320.7ZM422.94 1320.7V1279.53H424.86V1320.7ZM424.06 1320.7V1279.53H425.98V1320.7ZM425.18 1320.7V1279.53H427.1V1320.7ZM426.3 1320.7V1269.44H428.22V1320.7ZM427.42 1320.7V1269.44H429.34V1320.7ZM428.54 1320.7V1259.35H430.46V1320.7ZM429.66 1320.7V1259.35H431.58V1320.7ZM430.79 1320.7V1259.35H432.71V1320.7ZM431.91 1320.7V1259.35H433.83V1320.7ZM433.03 1320.7V1259.35H434.95V1320.7ZM434.15 1320.7V1279.53H436.07V1320.7ZM435.27 1320.7V1269.44H437.19V1320.7ZM436.39 1320.7V1279.53H438.31V1320.7ZM437.52 1320.7V1269.44H439.44V1320.7ZM438.64 1320.7V1269.44H440.56V1320.7ZM439.76 1320.7V1279.53H441.68V1320.7ZM440.88 1320.7V1269.44H442.8V1320.7ZM442 1320.7V1269.44H443.92V1320.7ZM443.12 1320.7V1279.53H445.04V1320.7ZM444.24 1320.7V1269.44H446.16V1320.7ZM445.37 1320.7V1269.44H447.29V1320.7ZM446.49 1320.7V1269.44H448.41V1320.7ZM447.61 1320.7V1269.44H449.53V1320.7ZM448.73 1320.7V1279.53H450.65V1320.7ZM449.85 1320.7V1269.44H451.77V1320.7ZM450.97 1320.7V1279.53H452.89V1320.7ZM452.09 1320.7V1269.44H454.01V1320.7ZM453.22 1320.7V1279.53H455.14V1320.7ZM454.34 1320.7V1269.44H456.26V1320.7ZM455.46 1320.7V1279.53H457.38V1320.7ZM456.58 1320.7V1269.44H458.5V1320.7ZM457.7 1320.7V1269.44H459.62V1320.7ZM458.82 1320.7V1269.44H460.74V1320.7ZM459.95 1320.7V1279.53H461.87V1320.7ZM461.07 1320.7V1269.44H462.99V1320.7ZM462.19 1320.7V1269.44H464.11V1320.7ZM463.31 1320.7V1269.44H465.23V1320.7ZM464.43 1320.7V1269.44H466.35V1320.7ZM465.55 1320.7V1269.44H467.47V1320.7ZM466.67 1320.7V1259.35H468.59V1320.7ZM467.8 1320.7V1259.35H469.72V1320.7ZM468.92 1320.7V1249.26H470.84V1320.7ZM470.04 1320.7V1249.26H471.96V1320.7ZM471.16 1320.7V1249.26H473.08V1320.7ZM472.28 1320.7V1249.26H474.2V1320.7ZM473.4 1320.7V1249.26H475.32V1320.7ZM474.53 1320.7V1249.26H476.45V1320.7ZM475.65 1320.7V1259.35H477.57V1320.7ZM476.77 1320.7V1259.35H478.69V1320.7ZM477.89 1320.7V1269.44H479.81V1320.7ZM479.01 1320.7V1269.44H480.93V1320.7ZM480.13 1320.7V1269.44H482.05V1320.7ZM481.25 1320.7V1279.53H483.17V1320.7ZM482.38 1320.7V1269.44H484.3V1320.7ZM483.5 1320.7V1279.53H485.42V1320.7ZM484.62 1320.7V1269.44H486.54V1320.7ZM485.74 1320.7V1269.44H487.66V1320.7ZM486.86 1320.7V1269.44H488.78V1320.7ZM487.98 1320.7V1269.44H489.9V1320.7ZM489.11 1320.7V1269.44H491.03V1320.7ZM490.23 1320.7V1269.44H492.15V1320.7ZM491.35 1320.7V1279.53H493.27V1320.7ZM492.47 1320.7V1269.44H494.39V1320.7ZM493.59 1320.7V1259.35H495.51V1320.7ZM494.71 1320.7V1259.35H496.63V1320.7ZM495.83 1320.7V1279.53H497.75V1320.7ZM496.96 1320.7V1269.44H498.88V1320.7ZM498.08 1320.7V1279.53H500V1320.7ZM499.2 1320.7V1269.44H501.12V1320.7ZM500.32 1320.7V1279.53H502.24V1320.7ZM501.44 1320.7V1269.44H503.36V1320.7ZM502.56 1320.7V1269.44H504.48V1320.7ZM503.69 1320.7V1279.53H505.61V1320.7ZM504.81 1320.7V1269.44H506.73V1320.7ZM505.93 1320.7V1269.44H507.85V1320.7ZM507.05 1320.7V1269.44H508.97V1320.7ZM508.17 1320.7V1279.53H510.09V1320.7ZM509.29 1320.7V1269.44H511.21V1320.7ZM510.41 1320.7V1269.44H512.33V1320.7ZM511.54 1320.7V1279.53H513.46V1320.7ZM512.66 1320.7V1269.44H514.58V1320.7ZM513.78 1320.7V1279.53H515.7V1320.7ZM514.9 1320.7V1269.44H516.82V1320.7ZM516.02 1320.7V1259.35H517.94V1320.7ZM517.14 1320.7V1259.35H519.06V1320.7ZM518.26 1320.7V1259.35H520.18V1320.7ZM519.39 1320.7V1259.35H521.31V1320.7ZM520.51 1320.7V1259.35H522.43V1320.7ZM521.63 1320.7V1259.35H523.55V1320.7ZM522.75 1320.7V1259.35H524.67V1320.7ZM523.87 1320.7V1259.35H525.79V1320.7ZM524.99 1320.7V1269.44H526.91V1320.7ZM526.12 1320.7V1269.44H528.04V1320.7ZM527.24 1320.7V1279.53H529.16V1320.7ZM528.36 1320.7V1269.44H530.28V1320.7ZM529.48 1320.7V1269.44H531.4V1320.7ZM530.6 1320.7V1269.44H532.52V1320.7ZM531.72 1320.7V1269.44H533.64V1320.7ZM532.84 1320.7V1269.44H534.76V1320.7ZM533.97 1320.7V1279.53H535.89V1320.7ZM535.09 1320.7V1269.44H537.01V1320.7ZM536.21 1320.7V1269.44H538.13V1320.7ZM537.33 1320.7V1269.44H539.25V1320.7ZM538.45 1320.7V1279.53H540.37V1320.7ZM539.57 1320.7V1269.44H541.49V1320.7ZM540.7 1320.7V1279.53H542.62V1320.7ZM541.82 1320.7V1269.44H543.74V1320.7ZM542.94 1320.7V1269.44H544.86V1320.7ZM544.06 1320.7V1269.44H545.98V1320.7ZM545.18 1320.7V1279.53H547.1V1320.7ZM546.3 1320.7V1269.44H548.22V1320.7ZM547.42 1320.7V1269.44H549.34V1320.7ZM548.55 1320.7V1269.44H550.47V1320.7ZM549.67 1320.7V1279.53H551.59V1320.7ZM550.79 1320.7V1269.44H552.71V1320.7ZM551.91 1320.7V1279.53H553.83V1320.7ZM553.03 1320.7V1269.44H554.95V1320.7ZM554.15 1320.7V1279.53H556.07V1320.7ZM555.28 1320.7V1259.35H557.2V1320.7ZM556.4 1320.7V1259.35H558.32V1320.7ZM557.52 1320.7V1259.35H559.44V1320.7ZM558.64 1320.7V1259.35H560.56V1320.7ZM559.76 1320.7V1259.35H561.68V1320.7ZM560.88 1320.7V1259.35H562.8V1320.7ZM562 1320.7V1259.35H563.92V1320.7ZM563.13 1320.7V1259.35H565.05V1320.7ZM564.25 1320.7V1259.35H566.17V1320.7ZM565.37 1320.7V1279.53H567.29V1320.7ZM566.49 1320.7V1269.44H568.41V1320.7ZM567.61 1320.7V1269.44H569.53V1320.7ZM568.73 1320.7V1269.44H570.65V1320.7ZM569.86 1320.7V1269.44H571.78V1320.7ZM570.98 1320.7V1269.44H572.9V1320.7ZM572.1 1320.7V1279.53H574.02V1320.7ZM573.22 1320.7V1269.44H575.14V1320.7ZM574.34 1320.7V1279.53H576.26V1320.7ZM575.46 1320.7V1269.44H577.38V1320.7ZM576.58 1320.7V1269.44H578.5V1320.7ZM577.71 1320.7V1269.44H579.63V1320.7ZM578.83 1320.7V1279.53H580.75V1320.7ZM579.95 1320.7V1269.44H581.87V1320.7ZM581.07 1320.7V1269.44H582.99V1320.7ZM582.19 1320.7V1279.53H584.11V1320.7ZM583.31 1320.7V1269.44H585.23V1320.7ZM584.44 1320.7V1279.53H586.36V1320.7ZM585.56 1320.7V1269.44H587.48V1320.7ZM586.68 1320.7V1269.44H588.6V1320.7ZM587.8 1320.7V1269.44H589.72V1320.7ZM588.92 1320.7V1269.44H590.84V1320.7ZM590.04 1320.7V1269.44H591.96V1320.7ZM591.16 1320.7V1279.53H593.08V1320.7ZM592.29 1320.7V1259.35H594.21V1320.7ZM593.41 1320.7V1259.35H595.33V1320.7ZM594.53 1320.7V1259.35H596.45V1320.7ZM595.65 1320.7V1259.35H597.57V1320.7ZM596.77 1320.7V1259.35H598.69V1320.7ZM597.89 1320.7V1259.35H599.81V1320.7ZM599.01 1320.7V1259.35H600.93V1320.7ZM600.14 1320.7V1259.35H602.06V1320.7ZM601.26 1320.7V1259.35H603.18V1320.7ZM602.38 1320.7V1259.35H604.3V1320.7ZM603.5 1320.7V1269.44H605.42V1320.7ZM604.62 1320.7V1279.53H606.54V1320.7ZM605.74 1320.7V1269.44H607.66V1320.7ZM606.87 1320.7V1269.44H608.79V1320.7ZM607.99 1320.7V1279.53H609.91V1320.7ZM609.11 1320.7V1269.44H611.03V1320.7ZM610.23 1320.7V1269.44H612.15V1320.7ZM611.35 1320.7V1269.44H613.27V1320.7ZM612.47 1320.7V1269.44H614.39V1320.7ZM613.59 1320.7V1279.53H615.51V1320.7ZM614.72 1320.7V1269.44H616.64V1320.7ZM615.84 1320.7V1279.53H617.76V1320.7ZM616.96 1320.7V1269.44H618.88V1320.7ZM618.08 1320.7V1269.44H620V1320.7ZM619.2 1320.7V1279.53H621.12V1320.7ZM620.32 1320.7V1269.44H622.24V1320.7ZM621.45 1320.7V1269.44H623.37V1320.7ZM622.57 1320.7V1279.53H624.49V1320.7ZM623.69 1320.7V1269.44H625.61V1320.7ZM624.81 1320.7V1269.44H626.73V1320.7ZM625.93 1320.7V1269.44H627.85V1320.7ZM627.05 1320.7V1269.44H628.97V1320.7ZM628.17 1320.7V1269.44H630.09V1320.7ZM629.3 1320.7V1269.44H631.22V1320.7ZM630.42 1320.7V1259.35H632.34V1320.7ZM631.54 1320.7V1249.26H633.46V1320.7ZM632.66 1320.7V1249.26H634.58V1320.7ZM633.78 1320.7V1259.35H635.7V1320.7ZM634.9 1320.7V1259.35H636.82V1320.7ZM636.03 1320.7V1259.35H637.95V1320.7ZM637.15 1320.7V1259.35H639.07V1320.7ZM638.27 1320.7V1259.35H640.19V1320.7ZM639.39 1320.7V1259.35H641.31V1320.7ZM640.51 1320.7V1259.35H642.43V1320.7ZM641.63 1320.7V1279.53H643.55V1320.7ZM642.75 1320.7V1269.44H644.67V1320.7ZM643.88 1320.7V1279.53H645.8V1320.7ZM645 1320.7V1279.53H646.92V1320.7ZM646.12 1320.7V1279.53H648.04V1320.7ZM647.24 1320.7V1279.53H649.16V1320.7ZM648.36 1320.7V1279.53H650.28V1320.7ZM649.48 1320.7V1279.53H651.4V1320.7ZM650.61 1320.7V1279.53H652.53V1320.7ZM651.73 1320.7V1279.53H653.65V1320.7ZM652.85 1320.7V1279.53H654.77V1320.7ZM653.97 1320.7V1279.53H655.89V1320.7ZM655.09 1320.7V1279.53H657.01V1320.7ZM656.21 1320.7V1279.53H658.13V1320.7ZM657.33 1320.7V1279.53H659.25V1320.7ZM658.46 1320.7V1279.53H660.38V1320.7ZM659.58 1320.7V1279.53H661.5V1320.7ZM660.7 1320.7V1279.53H662.62V1320.7ZM661.82 1320.7V1279.53H663.74V1320.7ZM662.94 1320.7V1279.53H664.86V1320.7ZM664.06 1320.7V1289.62H665.98V1320.7ZM665.19 1320.7V1279.53H667.11V1320.7ZM666.31 1320.7V1289.62H668.23V1320.7ZM667.43 1320.7V1279.53H669.35V1320.7ZM668.55 1320.7V1279.53H670.47V1320.7ZM669.67 1320.7V1279.53H671.59V1320.7ZM670.79 1320.7V1279.53H672.71V1320.7ZM671.91 1320.7V1279.53H673.83V1320.7ZM673.04 1320.7V1289.62H674.96V1320.7ZM674.16 1320.7V1279.53H676.08V1320.7ZM675.28 1320.7V1279.53H677.2V1320.7ZM676.4 1320.7V1289.62H678.32V1320.7ZM677.52 1320.7V1279.53H679.44V1320.7ZM678.64 1320.7V1279.53H680.56V1320.7ZM679.76 1320.7V1289.62H681.69V1320.7ZM680.89 1320.7V1279.53H682.81V1320.7ZM682.01 1320.7V1289.62H683.93V1320.7ZM683.13 1320.7V1279.53H685.05V1320.7ZM684.25 1320.7V1289.62H686.17V1320.7ZM685.37 1320.7V1279.53H687.29V1320.7ZM686.49 1320.7V1279.53H688.41V1320.7ZM687.62 1320.7V1279.53H689.54V1320.7ZM688.74 1320.7V1279.53H690.66V1320.7ZM689.86 1320.7V1289.62H691.78V1320.7ZM690.98 1320.7V1279.53H692.9V1320.7ZM692.1 1320.7V1279.53H694.02V1320.7ZM693.22 1320.7V1279.53H695.14V1320.7ZM694.34 1320.7V1289.62H696.26V1320.7ZM695.47 1320.7V1279.53H697.39V1320.7ZM696.59 1320.7V1289.62H698.51V1320.7ZM697.71 1320.7V1279.53H699.63V1320.7ZM698.83 1320.7V1289.62H700.75V1320.7ZM699.95 1320.7V1279.53H701.87V1320.7ZM701.07 1320.7V1289.62H702.99V1320.7ZM702.2 1320.7V1279.53H704.12V1320.7ZM703.32 1320.7V1289.62H705.24V1320.7ZM704.44 1320.7V1279.53H706.36V1320.7ZM705.56 1320.7V1279.53H707.48V1320.7ZM706.68 1320.7V1289.62H708.6V1320.7ZM707.8 1320.7V1279.53H709.72V1320.7ZM708.92 1320.7V1279.53H710.84V1320.7ZM710.05 1320.7V1279.53H711.97V1320.7ZM711.17 1320.7V1289.62H713.09V1320.7ZM712.29 1320.7V1279.53H714.21V1320.7ZM713.41 1320.7V1279.53H715.33V1320.7ZM714.53 1320.7V1279.53H716.45V1320.7ZM715.65 1320.7V1289.62H717.57V1320.7ZM716.78 1320.7V1279.53H718.7V1320.7ZM717.9 1320.7V1279.53H719.82V1320.7ZM719.02 1320.7V1269.44H720.94V1320.7ZM720.14 1320.7V1279.53H722.06V1320.7ZM721.26 1320.7V1269.44H723.18V1320.7ZM722.38 1320.7V1269.44H724.3V1320.7ZM723.5 1320.7V1269.44H725.42V1320.7ZM724.63 1320.7V1269.44H726.55V1320.7ZM725.75 1320.7V1269.44H727.67V1320.7ZM726.87 1320.7V1259.35H728.79V1320.7ZM727.99 1320.7V1259.35H729.91V1320.7ZM729.11 1320.7V1259.35H731.03V1320.7ZM730.23 1320.7V1259.35H732.15V1320.7ZM731.36 1320.7V1259.35H733.28V1320.7ZM732.48 1320.7V1259.35H734.4V1320.7ZM733.6 1320.7V1259.35H735.52V1320.7ZM734.72 1320.7V1269.44H736.64V1320.7ZM735.84 1320.7V1269.44H737.76V1320.7ZM736.96 1320.7V1279.53H738.88V1320.7ZM738.08 1320.7V1269.44H740V1320.7ZM739.21 1320.7V1269.44H741.13V1320.7ZM740.33 1320.7V1279.53H742.25V1320.7ZM741.45 1320.7V1269.44H743.37V1320.7ZM742.57 1320.7V1269.44H744.49V1320.7ZM743.69 1320.7V1279.53H745.61V1320.7ZM744.81 1320.7V1269.44H746.73V1320.7ZM745.94 1320.7V1269.44H747.86V1320.7ZM747.06 1320.7V1269.44H748.98V1320.7ZM748.18 1320.7V1269.44H750.1V1320.7ZM749.3 1320.7V1269.44H751.22V1320.7ZM750.42 1320.7V1259.35H752.34V1320.7ZM751.54 1320.7V1259.35H753.46V1320.7ZM752.66 1320.7V1269.44H754.58V1320.7ZM753.79 1320.7V1269.44H755.71V1320.7ZM754.91 1320.7V1269.44H756.83V1320.7ZM756.03 1320.7V1259.35H757.95V1320.7ZM757.15 1320.7V1259.35H759.07V1320.7ZM758.27 1320.7V1259.35H760.19V1320.7ZM759.39 1320.7V1259.35H761.31V1320.7ZM760.51 1320.7V1259.35H762.44V1320.7ZM761.64 1320.7V1249.26H763.56V1320.7ZM762.76 1320.7V1249.26H764.68V1320.7ZM763.88 1320.7V1249.26H765.8V1320.7ZM765 1320.7V1249.26H766.92V1320.7ZM766.12 1320.7V1249.26H768.04V1320.7ZM767.24 1320.7V1249.26H769.16V1320.7ZM768.37 1320.7V1249.26H770.29V1320.7ZM769.49 1320.7V1259.35H771.41V1320.7ZM770.61 1320.7V1259.35H772.53V1320.7ZM771.73 1320.7V1259.35H773.65V1320.7ZM772.85 1320.7V1259.35H774.77V1320.7ZM773.97 1320.7V1259.35H775.89V1320.7ZM775.09 1320.7V1259.35H777.01V1320.7ZM776.22 1320.7V1259.35H778.14V1320.7ZM777.34 1320.7V1269.44H779.26V1320.7ZM778.46 1320.7V1269.44H780.38V1320.7ZM779.58 1320.7V1259.35H781.5V1320.7ZM780.7 1320.7V1269.44H782.62V1320.7ZM781.82 1320.7V1269.44H783.74V1320.7ZM782.95 1320.7V1279.53H784.87V1320.7ZM784.07 1320.7V1259.35H785.99V1320.7ZM785.19 1320.7V1279.53H787.11V1320.7ZM786.31 1320.7V1269.44H788.23V1320.7ZM787.43 1320.7V1279.53H789.35V1320.7ZM788.55 1320.7V1259.35H790.47V1320.7ZM789.67 1320.7V1249.26H791.59V1320.7ZM790.8 1320.7V1249.26H792.72V1320.7ZM791.92 1320.7V1249.26H793.84V1320.7ZM793.04 1320.7V1249.26H794.96V1320.7ZM794.16 1320.7V1249.26H796.08V1320.7ZM795.28 1320.7V1249.26H797.2V1320.7ZM796.4 1320.7V1249.26H798.32V1320.7ZM797.53 1320.7V1249.26H799.45V1320.7ZM798.65 1320.7V1249.26H800.57V1320.7ZM799.77 1320.7V1249.26H801.69V1320.7ZM800.89 1320.7V1269.44H802.81V1320.7ZM802.01 1320.7V1259.35H803.93V1320.7ZM803.13 1320.7V1259.35H805.05V1320.7ZM804.25 1320.7V1259.35H806.17V1320.7ZM805.38 1320.7V1269.44H807.3V1320.7ZM806.5 1320.7V1259.35H808.42V1320.7ZM807.62 1320.7V1269.44H809.54V1320.7ZM808.74 1320.7V1259.35H810.66V1320.7ZM809.86 1320.7V1259.35H811.78V1320.7ZM810.98 1320.7V1269.44H812.9V1320.7ZM812.11 1320.7V1259.35H814.03V1320.7ZM813.23 1320.7V1269.44H815.15V1320.7ZM814.35 1320.7V1259.35H816.27V1320.7ZM815.47 1320.7V1249.26H817.39V1320.7ZM816.59 1320.7V1249.26H818.51V1320.7ZM817.71 1320.7V1249.26H819.63V1320.7ZM818.83 1320.7V1249.26H820.75V1320.7ZM819.96 1320.7V1249.26H821.88V1320.7ZM821.08 1320.7V1249.26H823V1320.7ZM822.2 1320.7V1249.26H824.12V1320.7ZM823.32 1320.7V1239.16H825.24V1320.7ZM824.44 1320.7V1239.16H826.36V1320.7ZM825.56 1320.7V1249.26H827.48V1320.7ZM826.69 1320.7V1249.26H828.61V1320.7ZM827.81 1320.7V1249.26H829.73V1320.7ZM828.93 1320.7V1249.26H830.85V1320.7ZM830.05 1320.7V1269.44H831.97V1320.7ZM831.17 1320.7V1259.35H833.09V1320.7ZM832.29 1320.7V1259.35H834.21V1320.7ZM833.41 1320.7V1269.44H835.33V1320.7ZM834.54 1320.7V1259.35H836.46V1320.7ZM835.66 1320.7V1269.44H837.58V1320.7ZM836.78 1320.7V1249.26H838.7V1320.7ZM837.9 1320.7V1249.26H839.82V1320.7ZM839.02 1320.7V1259.35H840.94V1320.7ZM840.14 1320.7V1259.35H842.06V1320.7ZM841.26 1320.7V1259.35H843.18V1320.7ZM842.39 1320.7V1249.26H844.31V1320.7ZM843.51 1320.7V1249.26H845.43V1320.7ZM844.63 1320.7V1249.26H846.55V1320.7ZM845.75 1320.7V1239.16H847.67V1320.7ZM846.87 1320.7V1239.16H848.79V1320.7ZM847.99 1320.7V1249.26H849.91V1320.7ZM849.12 1320.7V1249.26H851.04V1320.7ZM850.24 1320.7V1249.26H852.16V1320.7ZM851.36 1320.7V1249.26H853.28V1320.7ZM852.48 1320.7V1249.26H854.4V1320.7ZM853.6 1320.7V1239.16H855.52V1320.7ZM854.72 1320.7V1239.16H856.64V1320.7ZM855.84 1320.7V1249.26H857.76V1320.7ZM856.97 1320.7V1249.26H858.89V1320.7ZM858.09 1320.7V1239.16H860.01V1320.7ZM859.21 1320.7V1239.16H861.13V1320.7ZM860.33 1320.7V1249.26H862.25V1320.7ZM861.45 1320.7V1249.26H863.37V1320.7ZM862.57 1320.7V1259.35H864.49V1320.7ZM863.7 1320.7V1259.35H865.62V1320.7ZM864.82 1320.7V1269.44H866.74V1320.7ZM865.94 1320.7V1259.35H867.86V1320.7ZM867.06 1320.7V1269.44H868.98V1320.7ZM868.18 1320.7V1259.35H870.1V1320.7ZM869.3 1320.7V1269.44H871.22V1320.7ZM870.42 1320.7V1259.35H872.34V1320.7ZM871.55 1320.7V1259.35H873.47V1320.7ZM872.67 1320.7V1269.44H874.59V1320.7ZM873.79 1320.7V1259.35H875.71V1320.7ZM874.91 1320.7V1259.35H876.83V1320.7ZM876.03 1320.7V1269.44H877.95V1320.7ZM877.15 1320.7V1259.35H879.07V1320.7ZM878.28 1320.7V1269.44H880.2V1320.7ZM879.4 1320.7V1249.26H881.32V1320.7ZM880.52 1320.7V1249.26H882.44V1320.7ZM1029.68 1320.7V1279.53H1031.6V1320.7ZM1030.8 1320.7V1269.44H1032.72V1320.7ZM1031.92 1320.7V1269.44H1033.84V1320.7ZM1033.05 1320.7V1279.53H1034.97V1320.7ZM1034.17 1320.7V1249.26H1036.09V1320.7ZM1035.29 1320.7V1249.26H1037.21V1320.7ZM1036.41 1320.7V1249.26H1038.33V1320.7ZM1037.53 1320.7V1249.26H1039.45V1320.7ZM1038.65 1320.7V1249.26H1040.57V1320.7ZM1039.78 1320.7V1249.26H1041.7V1320.7ZM1040.9 1320.7V1269.44H1042.82V1320.7ZM1042.02 1320.7V1259.35H1043.94V1320.7ZM1043.14 1320.7V1259.35H1045.06V1320.7ZM1044.26 1320.7V1269.44H1046.18V1320.7ZM1045.38 1320.7V1259.35H1047.3V1320.7ZM1046.5 1320.7V1269.44H1048.42V1320.7ZM1047.63 1320.7V1259.35H1049.55V1320.7ZM1048.75 1320.7V1269.44H1050.67V1320.7ZM1049.87 1320.7V1259.35H1051.79V1320.7ZM1050.99 1320.7V1259.35H1052.91V1320.7ZM1052.11 1320.7V1259.35H1054.03V1320.7ZM1053.23 1320.7V1259.35H1055.15V1320.7ZM1054.36 1320.7V1259.35H1056.28V1320.7ZM1055.48 1320.7V1259.35H1057.4V1320.7ZM1056.6 1320.7V1269.44H1058.52V1320.7ZM1057.72 1320.7V1259.35H1059.64V1320.7ZM1058.84 1320.7V1259.35H1060.76V1320.7ZM1059.96 1320.7V1259.35H1061.88V1320.7ZM1061.08 1320.7V1259.35H1063V1320.7ZM1062.21 1320.7V1269.44H1064.13V1320.7ZM1063.33 1320.7V1259.35H1065.25V1320.7ZM1064.45 1320.7V1259.35H1066.37V1320.7ZM1065.57 1320.7V1269.44H1067.49V1320.7ZM1066.69 1320.7V1259.35H1068.61V1320.7ZM1067.81 1320.7V1269.44H1069.73V1320.7ZM1068.94 1320.7V1259.35H1070.86V1320.7ZM1070.06 1320.7V1269.44H1071.98V1320.7ZM1071.18 1320.7V1259.35H1073.1V1320.7ZM1072.3 1320.7V1269.44H1074.22V1320.7ZM1073.42 1320.7V1259.35H1075.34V1320.7ZM1074.54 1320.7V1269.44H1076.46V1320.7ZM1075.66 1320.7V1259.35H1077.58V1320.7ZM1076.79 1320.7V1259.35H1078.71V1320.7ZM1077.91 1320.7V1259.35H1079.83V1320.7ZM1079.03 1320.7V1269.44H1080.95V1320.7ZM1080.15 1320.7V1259.35H1082.07V1320.7ZM1081.27 1320.7V1239.16H1083.19V1320.7ZM1082.39 1320.7V1239.16H1084.31V1320.7ZM1083.51 1320.7V1249.26H1085.43V1320.7ZM1084.64 1320.7V1249.26H1086.56V1320.7ZM1085.76 1320.7V1249.26H1087.68V1320.7ZM1086.88 1320.7V1249.26H1088.8V1320.7ZM1088 1320.7V1239.16H1089.92V1320.7ZM1089.12 1320.7V1239.16H1091.04V1320.7ZM1090.24 1320.7V1259.35H1092.16V1320.7ZM1091.37 1320.7V1259.35H1093.29V1320.7ZM1092.49 1320.7V1279.53H1094.41V1320.7ZM1093.61 1320.7V1269.44H1095.53V1320.7ZM1094.73 1320.7V1269.44H1096.65V1320.7ZM1095.85 1320.7V1279.53H1097.77V1320.7ZM1096.97 1320.7V1269.44H1098.89V1320.7ZM1098.09 1320.7V1269.44H1100.01V1320.7ZM1099.22 1320.7V1279.53H1101.14V1320.7ZM1100.34 1320.7V1269.44H1102.26V1320.7ZM1101.46 1320.7V1279.53H1103.38V1320.7ZM1102.58 1320.7V1269.44H1104.5V1320.7ZM1103.7 1320.7V1279.53H1105.62V1320.7ZM1104.82 1320.7V1269.44H1106.74V1320.7ZM1105.95 1320.7V1269.44H1107.87V1320.7ZM1107.07 1320.7V1279.53H1108.99V1320.7ZM1108.19 1320.7V1269.44H1110.11V1320.7ZM1109.31 1320.7V1269.44H1111.23V1320.7ZM1110.43 1320.7V1269.44H1112.35V1320.7ZM1111.55 1320.7V1269.44H1113.47V1320.7ZM1112.67 1320.7V1269.44H1114.59V1320.7ZM1113.8 1320.7V1279.53H1115.72V1320.7ZM1114.92 1320.7V1269.44H1116.84V1320.7ZM1116.04 1320.7V1279.53H1117.96V1320.7ZM1117.16 1320.7V1269.44H1119.08V1320.7ZM1118.28 1320.7V1279.53H1120.2V1320.7ZM1119.4 1320.7V1269.44H1121.32V1320.7ZM1120.53 1320.7V1269.44H1122.45V1320.7ZM1121.65 1320.7V1279.53H1123.57V1320.7ZM1122.77 1320.7V1269.44H1124.69V1320.7ZM1123.89 1320.7V1279.53H1125.81V1320.7ZM1125.01 1320.7V1269.44H1126.93V1320.7ZM1126.13 1320.7V1269.44H1128.05V1320.7ZM1127.25 1320.7V1269.44H1129.17V1320.7ZM1128.38 1320.7V1259.35H1130.3V1320.7ZM1129.5 1320.7V1259.35H1131.42V1320.7ZM1130.62 1320.7V1259.35H1132.54V1320.7ZM1131.74 1320.7V1259.35H1133.66V1320.7ZM1132.86 1320.7V1259.35H1134.78V1320.7ZM1133.98 1320.7V1259.35H1135.9V1320.7ZM1135.11 1320.7V1259.35H1137.03V1320.7ZM1136.23 1320.7V1259.35H1138.15V1320.7ZM1137.35 1320.7V1259.35H1139.27V1320.7ZM1138.47 1320.7V1279.53H1140.39V1320.7ZM1139.59 1320.7V1269.44H1141.51V1320.7ZM1140.71 1320.7V1269.44H1142.63V1320.7ZM1141.83 1320.7V1269.44H1143.75V1320.7ZM1142.96 1320.7V1269.44H1144.88V1320.7ZM1144.08 1320.7V1269.44H1146V1320.7ZM1145.2 1320.7V1269.44H1147.12V1320.7ZM1146.32 1320.7V1269.44H1148.24V1320.7ZM1147.44 1320.7V1279.53H1149.36V1320.7ZM1148.56 1320.7V1269.44H1150.48V1320.7ZM1149.69 1320.7V1269.44H1151.61V1320.7ZM1150.81 1320.7V1269.44H1152.73V1320.7ZM1151.93 1320.7V1279.53H1153.85V1320.7ZM1153.05 1320.7V1269.44H1154.97V1320.7ZM1154.17 1320.7V1269.44H1156.09V1320.7ZM1155.29 1320.7V1279.53H1157.21V1320.7ZM1156.41 1320.7V1269.44H1158.33V1320.7ZM1157.54 1320.7V1269.44H1159.46V1320.7ZM1158.66 1320.7V1279.53H1160.58V1320.7ZM1159.78 1320.7V1269.44H1161.7V1320.7ZM1160.9 1320.7V1279.53H1162.82V1320.7ZM1162.02 1320.7V1269.44H1163.94V1320.7ZM1163.14 1320.7V1279.53H1165.06V1320.7ZM1164.26 1320.7V1269.44H1166.18V1320.7ZM1165.39 1320.7V1259.35H1167.31V1320.7ZM1166.51 1320.7V1259.35H1168.43V1320.7ZM1167.63 1320.7V1269.44H1169.55V1320.7ZM1168.75 1320.7V1269.44H1170.67V1320.7ZM1169.87 1320.7V1269.44H1171.79V1320.7ZM1170.99 1320.7V1269.44H1172.91V1320.7ZM1172.12 1320.7V1259.35H1174.04V1320.7ZM1173.24 1320.7V1259.35H1175.16V1320.7ZM1174.36 1320.7V1259.35H1176.28V1320.7ZM1175.48 1320.7V1259.35H1177.4V1320.7ZM1176.6 1320.7V1259.35H1178.52V1320.7ZM1177.72 1320.7V1259.35H1179.64V1320.7ZM1178.84 1320.7V1249.26H1180.76V1320.7ZM1179.97 1320.7V1249.26H1181.89V1320.7ZM1181.09 1320.7V1259.35H1183.01V1320.7ZM1182.21 1320.7V1259.35H1184.13V1320.7ZM1183.33 1320.7V1259.35H1185.25V1320.7ZM1184.45 1320.7V1259.35H1186.37V1320.7ZM1185.57 1320.7V1249.26H1187.49V1320.7ZM1186.7 1320.7V1249.26H1188.62V1320.7ZM1187.82 1320.7V1269.44H1189.74V1320.7ZM1188.94 1320.7V1269.44H1190.86V1320.7ZM1190.06 1320.7V1269.44H1191.98V1320.7ZM1191.18 1320.7V1269.44H1193.1V1320.7ZM1192.3 1320.7V1269.44H1194.22V1320.7ZM1193.42 1320.7V1269.44H1195.34V1320.7ZM1194.55 1320.7V1269.44H1196.47V1320.7ZM1195.67 1320.7V1279.53H1197.59V1320.7ZM1196.79 1320.7V1269.44H1198.71V1320.7ZM1197.91 1320.7V1269.44H1199.83V1320.7ZM1199.03 1320.7V1279.53H1200.95V1320.7ZM1200.15 1320.7V1269.44H1202.07V1320.7ZM1201.28 1320.7V1269.44H1203.2V1320.7ZM1202.4 1320.7V1269.44H1204.32V1320.7ZM1203.52 1320.7V1279.53H1205.44V1320.7ZM1352.68 1320.7V1249.26H1354.6V1320.7ZM1353.8 1320.7V1249.26H1355.72V1320.7ZM1354.92 1320.7V1249.26H1356.84V1320.7ZM1356.05 1320.7V1239.16H1357.97V1320.7ZM1357.17 1320.7V1239.16H1359.09V1320.7ZM1358.29 1320.7V1259.35H1360.21V1320.7ZM1359.41 1320.7V1259.35H1361.33V1320.7ZM1360.53 1320.7V1259.35H1362.45V1320.7ZM1361.65 1320.7V1249.26H1363.57V1320.7ZM1362.78 1320.7V1249.26H1364.7V1320.7ZM1363.9 1320.7V1269.44H1365.82V1320.7ZM1365.02 1320.7V1269.44H1366.94V1320.7ZM1366.14 1320.7V1269.44H1368.06V1320.7ZM1367.26 1320.7V1269.44H1369.18V1320.7ZM1368.38 1320.7V1259.35H1370.3V1320.7ZM1369.5 1320.7V1279.53H1371.42V1320.7ZM1370.63 1320.7V1269.44H1372.55V1320.7ZM1371.75 1320.7V1279.53H1373.67V1320.7ZM1372.87 1320.7V1269.44H1374.79V1320.7ZM1373.99 1320.7V1269.44H1375.91V1320.7ZM1375.11 1320.7V1269.44H1377.03V1320.7ZM1376.23 1320.7V1279.53H1378.15V1320.7ZM1377.36 1320.7V1269.44H1379.28V1320.7ZM1378.48 1320.7V1279.53H1380.4V1320.7ZM1379.6 1320.7V1269.44H1381.52V1320.7ZM1380.72 1320.7V1279.53H1382.64V1320.7ZM1381.84 1320.7V1269.44H1383.76V1320.7ZM1382.96 1320.7V1279.53H1384.88V1320.7ZM1384.08 1320.7V1269.44H1386V1320.7ZM1385.21 1320.7V1269.44H1387.13V1320.7ZM1386.33 1320.7V1279.53H1388.25V1320.7ZM1387.45 1320.7V1269.44H1389.37V1320.7ZM1388.57 1320.7V1269.44H1390.49V1320.7ZM1389.69 1320.7V1269.44H1391.61V1320.7ZM1390.81 1320.7V1259.35H1392.73V1320.7ZM1391.94 1320.7V1259.35H1393.86V1320.7ZM1393.06 1320.7V1269.44H1394.98V1320.7ZM1394.18 1320.7V1269.44H1396.1V1320.7ZM1395.3 1320.7V1269.44H1397.22V1320.7ZM1396.42 1320.7V1259.35H1398.34V1320.7ZM1397.54 1320.7V1259.35H1399.46V1320.7ZM1398.66 1320.7V1269.44H1400.58V1320.7ZM1399.79 1320.7V1269.44H1401.71V1320.7ZM1400.91 1320.7V1269.44H1402.83V1320.7ZM1402.03 1320.7V1259.35H1403.95V1320.7ZM1403.15 1320.7V1259.35H1405.07V1320.7ZM1404.27 1320.7V1259.35H1406.19V1320.7ZM1405.39 1320.7V1249.26H1407.31V1320.7ZM1406.51 1320.7V1249.26H1408.43V1320.7ZM1407.64 1320.7V1249.26H1409.56V1320.7ZM1408.76 1320.7V1249.26H1410.68V1320.7ZM1409.88 1320.7V1249.26H1411.8V1320.7ZM1411 1320.7V1249.26H1412.92V1320.7ZM1412.12 1320.7V1249.26H1414.04V1320.7ZM1413.24 1320.7V1259.35H1415.16V1320.7ZM1414.37 1320.7V1279.53H1416.29V1320.7ZM1415.49 1320.7V1269.44H1417.41V1320.7ZM1416.61 1320.7V1279.53H1418.53V1320.7ZM1417.73 1320.7V1269.44H1419.65V1320.7ZM1418.85 1320.7V1269.44H1420.77V1320.7ZM1419.97 1320.7V1269.44H1421.89V1320.7ZM1421.09 1320.7V1269.44H1423.01V1320.7ZM1422.22 1320.7V1269.44H1424.14V1320.7ZM1423.34 1320.7V1269.44H1425.26V1320.7ZM1424.46 1320.7V1279.53H1426.38V1320.7ZM1425.58 1320.7V1269.44H1427.5V1320.7ZM1426.7 1320.7V1269.44H1428.62V1320.7ZM1427.82 1320.7V1269.44H1429.74V1320.7ZM1428.95 1320.7V1269.44H1430.87V1320.7ZM1430.07 1320.7V1279.53H1431.99V1320.7ZM1431.19 1320.7V1269.44H1433.11V1320.7ZM1432.31 1320.7V1269.44H1434.23V1320.7ZM1433.43 1320.7V1279.53H1435.35V1320.7ZM1434.55 1320.7V1269.44H1436.47V1320.7ZM1435.67 1320.7V1269.44H1437.59V1320.7ZM1436.8 1320.7V1279.53H1438.72V1320.7ZM1437.92 1320.7V1269.44H1439.84V1320.7ZM1439.04 1320.7V1279.53H1440.96V1320.7ZM1440.16 1320.7V1269.44H1442.08V1320.7ZM1441.28 1320.7V1269.44H1443.2V1320.7ZM1442.4 1320.7V1279.53H1444.32V1320.7ZM1443.53 1320.7V1269.44H1445.45V1320.7ZM1444.65 1320.7V1269.44H1446.57V1320.7ZM1445.77 1320.7V1269.44H1447.69V1320.7ZM1446.89 1320.7V1269.44H1448.81V1320.7ZM1448.01 1320.7V1269.44H1449.93V1320.7ZM1449.13 1320.7V1259.35H1451.05V1320.7ZM1450.25 1320.7V1249.26H1452.17V1320.7ZM1451.38 1320.7V1249.26H1453.3V1320.7ZM1452.5 1320.7V1259.35H1454.42V1320.7ZM1453.62 1320.7V1259.35H1455.54V1320.7ZM1454.74 1320.7V1259.35H1456.66V1320.7ZM1455.86 1320.7V1259.35H1457.78V1320.7ZM1456.98 1320.7V1249.26H1458.9V1320.7ZM1458.11 1320.7V1249.26H1460.03V1320.7ZM1459.23 1320.7V1259.35H1461.15V1320.7ZM1460.35 1320.7V1269.44H1462.27V1320.7ZM1461.47 1320.7V1279.53H1463.39V1320.7ZM1462.59 1320.7V1269.44H1464.51V1320.7ZM1463.71 1320.7V1269.44H1465.63V1320.7ZM1464.83 1320.7V1269.44H1466.75V1320.7ZM1465.96 1320.7V1279.53H1467.88V1320.7ZM1467.08 1320.7V1269.44H1469V1320.7ZM1468.2 1320.7V1269.44H1470.12V1320.7ZM1469.32 1320.7V1269.44H1471.24V1320.7ZM1470.44 1320.7V1269.44H1472.36V1320.7ZM1471.56 1320.7V1269.44H1473.48V1320.7ZM1472.69 1320.7V1269.44H1474.61V1320.7ZM1473.81 1320.7V1269.44H1475.73V1320.7ZM1474.93 1320.7V1269.44H1476.85V1320.7ZM1476.05 1320.7V1269.44H1477.97V1320.7ZM1477.17 1320.7V1269.44H1479.09V1320.7ZM1478.29 1320.7V1269.44H1480.21V1320.7ZM1479.41 1320.7V1269.44H1481.33V1320.7ZM1480.54 1320.7V1269.44H1482.46V1320.7ZM1481.66 1320.7V1269.44H1483.58V1320.7ZM1482.78 1320.7V1269.44H1484.7V1320.7ZM1483.9 1320.7V1269.44H1485.82V1320.7ZM1485.02 1320.7V1249.26H1486.94V1320.7ZM1486.14 1320.7V1249.26H1488.06V1320.7ZM1487.26 1320.7V1259.35H1489.18V1320.7ZM1488.39 1320.7V1259.35H1490.31V1320.7ZM1489.51 1320.7V1259.35H1491.43V1320.7ZM1490.63 1320.7V1249.26H1492.55V1320.7ZM1491.75 1320.7V1249.26H1493.67V1320.7ZM1492.87 1320.7V1249.26H1494.79V1320.7ZM1493.99 1320.7V1259.35H1495.91V1320.7ZM1495.12 1320.7V1259.35H1497.04V1320.7ZM1496.24 1320.7V1259.35H1498.16V1320.7ZM1497.36 1320.7V1269.44H1499.28V1320.7ZM1498.48 1320.7V1269.44H1500.4V1320.7ZM1499.6 1320.7V1269.44H1501.52V1320.7ZM1500.72 1320.7V1269.44H1502.64V1320.7ZM1501.84 1320.7V1269.44H1503.76V1320.7ZM1502.97 1320.7V1269.44H1504.89V1320.7ZM1504.09 1320.7V1269.44H1506.01V1320.7ZM1505.21 1320.7V1269.44H1507.13V1320.7ZM1506.33 1320.7V1269.44H1508.25V1320.7ZM1507.45 1320.7V1269.44H1509.37V1320.7ZM1508.57 1320.7V1269.44H1510.49V1320.7ZM1509.7 1320.7V1269.44H1511.62V1320.7ZM1510.82 1320.7V1269.44H1512.74V1320.7ZM1511.94 1320.7V1259.35H1513.86V1320.7ZM1513.06 1320.7V1269.44H1514.98V1320.7ZM1514.18 1320.7V1259.35H1516.1V1320.7ZM1515.3 1320.7V1259.35H1517.22V1320.7ZM1516.42 1320.7V1269.44H1518.34V1320.7ZM1517.55 1320.7V1259.35H1519.47V1320.7ZM1518.67 1320.7V1259.35H1520.59V1320.7ZM1519.79 1320.7V1249.26H1521.71V1320.7ZM1520.91 1320.7V1249.26H1522.83V1320.7ZM1522.03 1320.7V1249.26H1523.95V1320.7ZM1523.15 1320.7V1249.26H1525.07V1320.7ZM1524.28 1320.7V1249.26H1526.2V1320.7ZM1525.4 1320.7V1249.26H1527.32V1320.7ZM1526.52 1320.7V1259.35H1528.44V1320.7ZM1675.68 1320.7V1259.35H1677.6V1320.7ZM1676.8 1320.7V1259.35H1678.72V1320.7ZM1677.92 1320.7V1269.44H1679.84V1320.7ZM1679.05 1320.7V1269.44H1680.97V1320.7ZM1680.17 1320.7V1269.44H1682.09V1320.7ZM1681.29 1320.7V1249.26H1683.21V1320.7ZM1682.41 1320.7V1249.26H1684.33V1320.7ZM1683.53 1320.7V1259.35H1685.45V1320.7ZM1684.65 1320.7V1259.35H1686.57V1320.7ZM1685.78 1320.7V1259.35H1687.7V1320.7ZM1686.9 1320.7V1259.35H1688.82V1320.7ZM1688.02 1320.7V1249.26H1689.94V1320.7ZM1689.14 1320.7V1249.26H1691.06V1320.7ZM1690.26 1320.7V1249.26H1692.18V1320.7ZM1691.38 1320.7V1249.26H1693.3V1320.7ZM1692.5 1320.7V1239.16H1694.42V1320.7ZM1693.63 1320.7V1239.16H1695.55V1320.7ZM1694.75 1320.7V1259.35H1696.67V1320.7ZM1695.87 1320.7V1259.35H1697.79V1320.7ZM1696.99 1320.7V1259.35H1698.91V1320.7ZM1698.11 1320.7V1249.26H1700.03V1320.7ZM1699.23 1320.7V1249.26H1701.15V1320.7ZM1700.36 1320.7V1269.44H1702.28V1320.7ZM1701.48 1320.7V1269.44H1703.4V1320.7ZM1702.6 1320.7V1259.35H1704.52V1320.7ZM1703.72 1320.7V1259.35H1705.64V1320.7ZM1704.84 1320.7V1269.44H1706.76V1320.7ZM1705.96 1320.7V1269.44H1707.88V1320.7ZM1707.08 1320.7V1269.44H1709V1320.7ZM1708.21 1320.7V1269.44H1710.13V1320.7ZM1709.33 1320.7V1269.44H1711.25V1320.7ZM1710.45 1320.7V1259.35H1712.37V1320.7ZM1711.57 1320.7V1259.35H1713.49V1320.7ZM1712.69 1320.7V1259.35H1714.61V1320.7ZM1713.81 1320.7V1259.35H1715.73V1320.7ZM1714.94 1320.7V1269.44H1716.86V1320.7ZM1716.06 1320.7V1259.35H1717.98V1320.7ZM1717.18 1320.7V1259.35H1719.1V1320.7ZM1718.3 1320.7V1259.35H1720.22V1320.7ZM1719.42 1320.7V1269.44H1721.34V1320.7ZM1720.54 1320.7V1259.35H1722.46V1320.7ZM1721.66 1320.7V1259.35H1723.58V1320.7ZM1722.79 1320.7V1259.35H1724.71V1320.7ZM1723.91 1320.7V1269.44H1725.83V1320.7ZM1725.03 1320.7V1259.35H1726.95V1320.7ZM1726.15 1320.7V1259.35H1728.07V1320.7ZM1727.27 1320.7V1259.35H1729.19V1320.7ZM1728.39 1320.7V1259.35H1730.31V1320.7ZM1729.51 1320.7V1259.35H1731.43V1320.7ZM1730.64 1320.7V1259.35H1732.56V1320.7ZM1731.76 1320.7V1259.35H1733.68V1320.7ZM1732.88 1320.7V1269.44H1734.8V1320.7ZM1734 1320.7V1259.35H1735.92V1320.7ZM1735.12 1320.7V1269.44H1737.04V1320.7ZM1736.24 1320.7V1259.35H1738.16V1320.7ZM1737.37 1320.7V1259.35H1739.29V1320.7ZM1738.49 1320.7V1259.35H1740.41V1320.7ZM1739.61 1320.7V1269.44H1741.53V1320.7ZM1740.73 1320.7V1259.35H1742.65V1320.7ZM1741.85 1320.7V1259.35H1743.77V1320.7ZM1742.97 1320.7V1259.35H1744.89V1320.7ZM1744.09 1320.7V1269.44H1746.01V1320.7ZM1745.22 1320.7V1259.35H1747.14V1320.7ZM1746.34 1320.7V1259.35H1748.26V1320.7ZM1747.46 1320.7V1269.44H1749.38V1320.7ZM1748.58 1320.7V1269.44H1750.5V1320.7ZM1749.7 1320.7V1269.44H1751.62V1320.7ZM1750.82 1320.7V1269.44H1752.74V1320.7ZM1751.95 1320.7V1269.44H1753.87V1320.7ZM1753.07 1320.7V1269.44H1754.99V1320.7ZM1754.19 1320.7V1259.35H1756.11V1320.7ZM1755.31 1320.7V1259.35H1757.23V1320.7ZM1756.43 1320.7V1269.44H1758.35V1320.7ZM1757.55 1320.7V1269.44H1759.47V1320.7ZM1758.67 1320.7V1269.44H1760.59V1320.7ZM1759.8 1320.7V1269.44H1761.72V1320.7ZM1760.92 1320.7V1269.44H1762.84V1320.7ZM1762.04 1320.7V1269.44H1763.96V1320.7ZM1763.16 1320.7V1259.35H1765.08V1320.7ZM1764.28 1320.7V1259.35H1766.2V1320.7ZM1765.4 1320.7V1269.44H1767.32V1320.7ZM1766.53 1320.7V1259.35H1768.45V1320.7ZM1767.65 1320.7V1269.44H1769.57V1320.7ZM1768.77 1320.7V1249.26H1770.69V1320.7ZM1769.89 1320.7V1259.35H1771.81V1320.7ZM1771.01 1320.7V1249.26H1772.93V1320.7ZM1772.13 1320.7V1249.26H1774.05V1320.7ZM1773.25 1320.7V1249.26H1775.17V1320.7ZM1774.38 1320.7V1249.26H1776.3V1320.7ZM1775.5 1320.7V1249.26H1777.42V1320.7ZM1776.62 1320.7V1259.35H1778.54V1320.7ZM1777.74 1320.7V1249.26H1779.66V1320.7ZM1778.86 1320.7V1259.35H1780.78V1320.7ZM1779.98 1320.7V1249.26H1781.9V1320.7ZM1781.11 1320.7V1259.35H1783.03V1320.7ZM1782.23 1320.7V1269.44H1784.15V1320.7ZM1783.35 1320.7V1269.44H1785.27V1320.7ZM1784.47 1320.7V1269.44H1786.39V1320.7ZM1785.59 1320.7V1269.44H1787.51V1320.7ZM1786.71 1320.7V1269.44H1788.63V1320.7ZM1787.83 1320.7V1259.35H1789.75V1320.7ZM1788.96 1320.7V1259.35H1790.88V1320.7ZM1790.08 1320.7V1269.44H1792V1320.7ZM1791.2 1320.7V1269.44H1793.12V1320.7ZM1792.32 1320.7V1269.44H1794.24V1320.7ZM1793.44 1320.7V1269.44H1795.36V1320.7ZM1794.56 1320.7V1269.44H1796.48V1320.7ZM1795.69 1320.7V1269.44H1797.61V1320.7ZM1796.81 1320.7V1269.44H1798.73V1320.7ZM1797.93 1320.7V1269.44H1799.85V1320.7ZM1799.05 1320.7V1269.44H1800.97V1320.7ZM1800.17 1320.7V1259.35H1802.09V1320.7ZM1801.29 1320.7V1259.35H1803.21V1320.7ZM1802.41 1320.7V1259.35H1804.33V1320.7ZM1803.54 1320.7V1259.35H1805.46V1320.7ZM1804.66 1320.7V1259.35H1806.58V1320.7ZM1805.78 1320.7V1249.26H1807.7V1320.7ZM1806.9 1320.7V1249.26H1808.82V1320.7ZM1808.02 1320.7V1259.35H1809.94V1320.7ZM1809.14 1320.7V1249.26H1811.06V1320.7ZM1810.26 1320.7V1249.26H1812.18V1320.7ZM1811.39 1320.7V1259.35H1813.31V1320.7ZM1812.51 1320.7V1249.26H1814.43V1320.7ZM1813.63 1320.7V1249.26H1815.55V1320.7ZM1814.75 1320.7V1249.26H1816.67V1320.7ZM1815.87 1320.7V1259.35H1817.79V1320.7ZM1816.99 1320.7V1249.26H1818.91V1320.7ZM1818.12 1320.7V1249.26H1820.04V1320.7ZM1819.24 1320.7V1259.35H1821.16V1320.7ZM1820.36 1320.7V1269.44H1822.28V1320.7ZM1821.48 1320.7V1269.44H1823.4V1320.7ZM1822.6 1320.7V1269.44H1824.52V1320.7ZM1823.72 1320.7V1259.35H1825.64V1320.7ZM1824.84 1320.7V1259.35H1826.76V1320.7ZM1825.97 1320.7V1259.35H1827.89V1320.7ZM1827.09 1320.7V1259.35H1829.01V1320.7ZM1828.21 1320.7V1259.35H1830.13V1320.7ZM1829.33 1320.7V1269.44H1831.25V1320.7ZM1830.45 1320.7V1269.44H1832.37V1320.7ZM1831.57 1320.7V1269.44H1833.49V1320.7ZM1832.7 1320.7V1269.44H1834.62V1320.7ZM1833.82 1320.7V1259.35H1835.74V1320.7ZM1834.94 1320.7V1259.35H1836.86V1320.7ZM1836.06 1320.7V1269.44H1837.98V1320.7ZM1837.18 1320.7V1259.35H1839.1V1320.7ZM1838.3 1320.7V1259.35H1840.22V1320.7ZM1839.42 1320.7V1259.35H1841.34V1320.7ZM1840.55 1320.7V1269.44H1842.47V1320.7ZM1841.67 1320.7V1269.44H1843.59V1320.7ZM1842.79 1320.7V1269.44H1844.71V1320.7ZM1843.91 1320.7V1269.44H1845.83V1320.7ZM1845.03 1320.7V1259.35H1846.95V1320.7ZM1846.15 1320.7V1249.26H1848.07V1320.7ZM1847.28 1320.7V1259.35H1849.2V1320.7ZM1848.4 1320.7V1249.26H1850.32V1320.7ZM1849.52 1320.7V1249.26H1851.44V1320.7ZM1998.68 1320.7V1249.26H2000.6V1320.7ZM1999.8 1320.7V1249.26H2001.72V1320.7ZM2000.92 1320.7V1249.26H2002.84V1320.7ZM2002.05 1320.7V1239.16H2003.97V1320.7ZM2003.17 1320.7V1218.98H2005.09V1320.7ZM2004.29 1320.7V1239.16H2006.21V1320.7ZM2005.41 1320.7V1259.35H2007.33V1320.7ZM2006.53 1320.7V1269.44H2008.45V1320.7ZM2007.65 1320.7V1259.35H2009.57V1320.7ZM2008.78 1320.7V1269.44H2010.7V1320.7ZM2009.9 1320.7V1259.35H2011.82V1320.7ZM2011.02 1320.7V1269.44H2012.94V1320.7ZM2012.14 1320.7V1259.35H2014.06V1320.7ZM2013.26 1320.7V1259.35H2015.18V1320.7ZM2014.38 1320.7V1259.35H2016.3V1320.7ZM2015.5 1320.7V1269.44H2017.42V1320.7ZM2016.63 1320.7V1259.35H2018.55V1320.7ZM2017.75 1320.7V1259.35H2019.67V1320.7ZM2018.87 1320.7V1259.35H2020.79V1320.7ZM2019.99 1320.7V1259.35H2021.91V1320.7ZM2021.11 1320.7V1259.35H2023.03V1320.7ZM2022.23 1320.7V1269.44H2024.15V1320.7ZM2023.36 1320.7V1259.35H2025.28V1320.7ZM2024.48 1320.7V1269.44H2026.4V1320.7ZM2025.6 1320.7V1259.35H2027.52V1320.7ZM2026.72 1320.7V1269.44H2028.64V1320.7ZM2027.84 1320.7V1259.35H2029.76V1320.7ZM2028.96 1320.7V1259.35H2030.88V1320.7ZM2030.08 1320.7V1269.44H2032V1320.7ZM2031.21 1320.7V1259.35H2033.13V1320.7ZM2032.33 1320.7V1259.35H2034.25V1320.7ZM2033.45 1320.7V1259.35H2035.37V1320.7ZM2034.57 1320.7V1269.44H2036.49V1320.7ZM2035.69 1320.7V1259.35H2037.61V1320.7ZM2036.81 1320.7V1269.44H2038.73V1320.7ZM2037.94 1320.7V1259.35H2039.86V1320.7ZM2039.06 1320.7V1269.44H2040.98V1320.7ZM2040.18 1320.7V1259.35H2042.1V1320.7ZM2041.3 1320.7V1259.35H2043.22V1320.7ZM2042.42 1320.7V1269.44H2044.34V1320.7ZM2043.54 1320.7V1259.35H2045.46V1320.7ZM2044.66 1320.7V1269.44H2046.58V1320.7ZM2045.79 1320.7V1259.35H2047.71V1320.7ZM2046.91 1320.7V1259.35H2048.83V1320.7ZM2048.03 1320.7V1259.35H2049.95V1320.7ZM2049.15 1320.7V1259.35H2051.07V1320.7ZM2050.27 1320.7V1249.26H2052.19V1320.7ZM2051.39 1320.7V1249.26H2053.31V1320.7ZM2052.51 1320.7V1249.26H2054.43V1320.7ZM2053.64 1320.7V1249.26H2055.56V1320.7ZM2054.76 1320.7V1249.26H2056.68V1320.7ZM2055.88 1320.7V1249.26H2057.8V1320.7ZM2057 1320.7V1249.26H2058.92V1320.7ZM2058.12 1320.7V1249.26H2060.04V1320.7ZM2059.24 1320.7V1259.35H2061.16V1320.7ZM2060.37 1320.7V1279.53H2062.29V1320.7ZM2061.49 1320.7V1269.44H2063.41V1320.7ZM2062.61 1320.7V1279.53H2064.53V1320.7ZM2063.73 1320.7V1269.44H2065.65V1320.7ZM2064.85 1320.7V1269.44H2066.77V1320.7ZM2065.97 1320.7V1269.44H2067.89V1320.7ZM2067.09 1320.7V1279.53H2069.01V1320.7ZM2068.22 1320.7V1269.44H2070.14V1320.7ZM2069.34 1320.7V1269.44H2071.26V1320.7ZM2070.46 1320.7V1279.53H2072.38V1320.7ZM2071.58 1320.7V1269.44H2073.5V1320.7ZM2072.7 1320.7V1269.44H2074.62V1320.7ZM2073.82 1320.7V1269.44H2075.74V1320.7ZM2074.95 1320.7V1279.53H2076.87V1320.7ZM2076.07 1320.7V1269.44H2077.99V1320.7ZM2077.19 1320.7V1269.44H2079.11V1320.7ZM2078.31 1320.7V1269.44H2080.23V1320.7ZM2079.43 1320.7V1279.53H2081.35V1320.7ZM2080.55 1320.7V1269.44H2082.47V1320.7ZM2081.67 1320.7V1269.44H2083.59V1320.7ZM2082.8 1320.7V1269.44H2084.72V1320.7ZM2083.92 1320.7V1269.44H2085.84V1320.7ZM2085.04 1320.7V1279.53H2086.96V1320.7ZM2086.16 1320.7V1269.44H2088.08V1320.7ZM2087.28 1320.7V1279.53H2089.2V1320.7ZM2088.4 1320.7V1279.53H2090.32V1320.7ZM2089.53 1320.7V1279.53H2091.45V1320.7ZM2090.65 1320.7V1279.53H2092.57V1320.7ZM2091.77 1320.7V1279.53H2093.69V1320.7ZM2092.89 1320.7V1269.44H2094.81V1320.7ZM2094.01 1320.7V1289.62H2095.93V1320.7ZM2095.13 1320.7V1279.53H2097.05V1320.7ZM2096.25 1320.7V1279.53H2098.17V1320.7ZM2097.38 1320.7V1279.53H2099.3V1320.7ZM2098.5 1320.7V1279.53H2100.42V1320.7ZM2099.62 1320.7V1279.53H2101.54V1320.7ZM2100.74 1320.7V1289.62H2102.66V1320.7ZM2101.86 1320.7V1279.53H2103.78V1320.7ZM2102.98 1320.7V1279.53H2104.9V1320.7ZM2104.11 1320.7V1279.53H2106.03V1320.7ZM2105.23 1320.7V1289.62H2107.15V1320.7ZM2106.35 1320.7V1279.53H2108.27V1320.7ZM2107.47 1320.7V1279.53H2109.39V1320.7ZM2108.59 1320.7V1289.62H2110.51V1320.7ZM2109.71 1320.7V1279.53H2111.63V1320.7ZM2110.83 1320.7V1279.53H2112.75V1320.7ZM2111.96 1320.7V1279.53H2113.88V1320.7ZM2113.08 1320.7V1289.62H2115V1320.7ZM2114.2 1320.7V1279.53H2116.12V1320.7ZM2115.32 1320.7V1279.53H2117.24V1320.7ZM2116.44 1320.7V1279.53H2118.36V1320.7ZM2117.56 1320.7V1279.53H2119.48V1320.7ZM2118.69 1320.7V1279.53H2120.61V1320.7ZM2119.81 1320.7V1269.44H2121.73V1320.7ZM2120.93 1320.7V1279.53H2122.85V1320.7ZM2122.05 1320.7V1279.53H2123.97V1320.7ZM2123.17 1320.7V1269.44H2125.09V1320.7ZM2124.29 1320.7V1269.44H2126.21V1320.7ZM2125.41 1320.7V1269.44H2127.33V1320.7ZM2126.54 1320.7V1259.35H2128.46V1320.7ZM2127.66 1320.7V1269.44H2129.58V1320.7ZM2128.78 1320.7V1269.44H2130.7V1320.7ZM2129.9 1320.7V1259.35H2131.82V1320.7ZM2131.02 1320.7V1269.44H2132.94V1320.7ZM2132.14 1320.7V1279.53H2134.06V1320.7ZM2133.26 1320.7V1279.53H2135.18V1320.7ZM2134.39 1320.7V1289.62H2136.31V1320.7ZM2135.51 1320.7V1279.53H2137.43V1320.7ZM2136.63 1320.7V1279.53H2138.55V1320.7ZM2137.75 1320.7V1269.44H2139.67V1320.7ZM2138.87 1320.7V1279.53H2140.79V1320.7ZM2139.99 1320.7V1289.62H2141.91V1320.7ZM2141.12 1320.7V1279.53H2143.04V1320.7ZM2142.24 1320.7V1279.53H2144.16V1320.7ZM2143.36 1320.7V1279.53H2145.28V1320.7ZM2144.48 1320.7V1269.44H2146.4V1320.7ZM2145.6 1320.7V1279.53H2147.52V1320.7ZM2146.72 1320.7V1289.62H2148.64V1320.7ZM2147.84 1320.7V1279.53H2149.76V1320.7ZM2148.97 1320.7V1269.44H2150.89V1320.7ZM2150.09 1320.7V1279.53H2152.01V1320.7ZM2151.21 1320.7V1289.62H2153.13V1320.7ZM2152.33 1320.7V1279.53H2154.25V1320.7ZM2153.45 1320.7V1279.53H2155.37V1320.7ZM2154.57 1320.7V1269.44H2156.49V1320.7ZM2155.7 1320.7V1289.62H2157.62V1320.7ZM2156.82 1320.7V1269.44H2158.74V1320.7ZM2157.94 1320.7V1279.53H2159.86V1320.7ZM2159.06 1320.7V1279.53H2160.98V1320.7ZM2160.18 1320.7V1279.53H2162.1V1320.7ZM2161.3 1320.7V1279.53H2163.22V1320.7ZM2162.42 1320.7V1279.53H2164.34V1320.7ZM2163.55 1320.7V1279.53H2165.47V1320.7ZM2164.67 1320.7V1269.44H2166.59V1320.7ZM2165.79 1320.7V1279.53H2167.71V1320.7ZM2166.91 1320.7V1269.44H2168.83V1320.7ZM2168.03 1320.7V1269.44H2169.95V1320.7ZM2169.15 1320.7V1269.44H2171.07V1320.7ZM2170.28 1320.7V1259.35H2172.2V1320.7ZM2171.4 1320.7V1279.53H2173.32V1320.7ZM2172.52 1320.7V1269.44H2174.44V1320.7ZM2321.68 1320.7V1259.35H2323.6V1320.7ZM2322.8 1320.7V1259.35H2324.72V1320.7ZM2323.92 1320.7V1279.53H2325.84V1320.7ZM2325.05 1320.7V1269.44H2326.97V1320.7ZM2326.17 1320.7V1279.53H2328.09V1320.7ZM2327.29 1320.7V1279.53H2329.21V1320.7ZM2328.41 1320.7V1269.44H2330.33V1320.7ZM2329.53 1320.7V1269.44H2331.45V1320.7ZM2330.65 1320.7V1279.53H2332.57V1320.7ZM2331.78 1320.7V1279.53H2333.7V1320.7ZM2332.9 1320.7V1279.53H2334.82V1320.7ZM2334.02 1320.7V1269.44H2335.94V1320.7ZM2335.14 1320.7V1269.44H2337.06V1320.7ZM2336.26 1320.7V1279.53H2338.18V1320.7ZM2337.38 1320.7V1269.44H2339.3V1320.7ZM2338.5 1320.7V1279.53H2340.42V1320.7ZM2339.63 1320.7V1269.44H2341.55V1320.7ZM2340.75 1320.7V1269.44H2342.67V1320.7ZM2341.87 1320.7V1279.53H2343.79V1320.7ZM2342.99 1320.7V1279.53H2344.91V1320.7ZM2344.11 1320.7V1279.53H2346.03V1320.7ZM2345.23 1320.7V1269.44H2347.15V1320.7ZM2346.36 1320.7V1269.44H2348.28V1320.7ZM2347.48 1320.7V1269.44H2349.4V1320.7ZM2348.6 1320.7V1279.53H2350.52V1320.7ZM2349.72 1320.7V1279.53H2351.64V1320.7ZM2350.84 1320.7V1279.53H2352.76V1320.7ZM2351.96 1320.7V1269.44H2353.88V1320.7ZM2353.08 1320.7V1269.44H2355V1320.7ZM2354.21 1320.7V1279.53H2356.13V1320.7ZM2355.33 1320.7V1279.53H2357.25V1320.7ZM2356.45 1320.7V1269.44H2358.37V1320.7ZM2357.57 1320.7V1269.44H2359.49V1320.7ZM2358.69 1320.7V1269.44H2360.61V1320.7ZM2359.81 1320.7V1269.44H2361.73V1320.7ZM2360.94 1320.7V1279.53H2362.86V1320.7ZM2362.06 1320.7V1269.44H2363.98V1320.7ZM2363.18 1320.7V1279.53H2365.1V1320.7ZM2364.3 1320.7V1269.44H2366.22V1320.7ZM2365.42 1320.7V1269.44H2367.34V1320.7ZM2366.54 1320.7V1279.53H2368.46V1320.7ZM2367.66 1320.7V1269.44H2369.58V1320.7ZM2368.79 1320.7V1269.44H2370.71V1320.7ZM2369.91 1320.7V1269.44H2371.83V1320.7ZM2371.03 1320.7V1269.44H2372.95V1320.7ZM2372.15 1320.7V1279.53H2374.07V1320.7ZM2373.27 1320.7V1269.44H2375.19V1320.7ZM2374.39 1320.7V1269.44H2376.31V1320.7ZM2375.51 1320.7V1269.44H2377.43V1320.7ZM2376.64 1320.7V1269.44H2378.56V1320.7ZM2377.76 1320.7V1279.53H2379.68V1320.7ZM2378.88 1320.7V1269.44H2380.8V1320.7ZM2380 1320.7V1269.44H2381.92V1320.7ZM2381.12 1320.7V1269.44H2383.04V1320.7ZM2382.24 1320.7V1279.53H2384.16V1320.7ZM2383.37 1320.7V1279.53H2385.29V1320.7ZM2384.49 1320.7V1279.53H2386.41V1320.7ZM2385.61 1320.7V1279.53H2387.53V1320.7ZM2386.73 1320.7V1269.44H2388.65V1320.7ZM2387.85 1320.7V1289.62H2389.77V1320.7ZM2388.97 1320.7V1279.53H2390.89V1320.7ZM2390.09 1320.7V1269.44H2392.01V1320.7ZM2391.22 1320.7V1279.53H2393.14V1320.7ZM2392.34 1320.7V1279.53H2394.26V1320.7ZM2393.46 1320.7V1289.62H2395.38V1320.7ZM2394.58 1320.7V1269.44H2396.5V1320.7ZM2395.7 1320.7V1279.53H2397.62V1320.7ZM2396.82 1320.7V1279.53H2398.74V1320.7ZM2397.95 1320.7V1279.53H2399.87V1320.7ZM2399.07 1320.7V1279.53H2400.99V1320.7ZM2400.19 1320.7V1279.53H2402.11V1320.7ZM2401.31 1320.7V1269.44H2403.23V1320.7ZM2402.43 1320.7V1279.53H2404.35V1320.7ZM2403.55 1320.7V1279.53H2405.47V1320.7ZM2404.67 1320.7V1279.53H2406.59V1320.7ZM2405.8 1320.7V1269.44H2407.72V1320.7ZM2406.92 1320.7V1279.53H2408.84V1320.7ZM2408.04 1320.7V1269.44H2409.96V1320.7ZM2409.16 1320.7V1279.53H2411.08V1320.7ZM2410.28 1320.7V1279.53H2412.2V1320.7ZM2411.4 1320.7V1279.53H2413.32V1320.7ZM2412.53 1320.7V1269.44H2414.45V1320.7ZM2413.65 1320.7V1269.44H2415.57V1320.7ZM2414.77 1320.7V1269.44H2416.5V1320.7Z" fill="#a0ecc5"/>
<path d="M881.64 1320.7V1239.16H883.56V1320.7ZM882.76 1320.7V1239.16H884.68V1320.7ZM883.88 1320.7V1239.16H885.8V1320.7ZM885 1320.7V1239.16H886.92V1320.7ZM886.13 1320.7V1239.16H888.05V1320.7ZM887.25 1320.7V1239.16H889.17V1320.7ZM888.37 1320.7V1239.16H890.29V1320.7ZM889.49 1320.7V1249.26H891.41V1320.7ZM890.61 1320.7V1259.35H892.53V1320.7ZM891.73 1320.7V1249.26H893.65V1320.7ZM892.86 1320.7V1249.26H894.78V1320.7ZM893.98 1320.7V1249.26H895.9V1320.7ZM895.1 1320.7V1249.26H897.02V1320.7ZM896.22 1320.7V1218.98H898.14V1320.7ZM897.34 1320.7V1158.43H899.26V1320.7ZM898.46 1320.7V1158.43H900.38V1320.7ZM899.58 1320.7V1218.98H901.5V1320.7ZM900.71 1320.7V1239.16H902.63V1320.7ZM901.83 1320.7V1097.88H903.75V1320.7ZM902.95 1320.7V936.4H904.87V1320.7ZM904.07 1320.7V996.96H905.99V1320.7ZM905.19 1320.7V1178.61H907.11V1320.7ZM906.31 1320.7V1208.89H908.23V1320.7ZM907.44 1320.7V1208.89H909.36V1320.7ZM908.56 1320.7V1188.7H910.48V1320.7ZM909.68 1320.7V1188.7H911.6V1320.7ZM910.8 1320.7V1218.98H912.72V1320.7ZM911.92 1320.7V1218.98H913.84V1320.7ZM913.04 1320.7V1229.07H914.96V1320.7ZM914.16 1320.7V1239.16H916.08V1320.7ZM915.29 1320.7V1229.07H917.21V1320.7ZM916.41 1320.7V1229.07H918.33V1320.7ZM917.53 1320.7V1229.07H919.45V1320.7ZM918.65 1320.7V1229.07H920.57V1320.7ZM919.77 1320.7V1249.26H921.69V1320.7ZM920.89 1320.7V1249.26H922.81V1320.7ZM922.01 1320.7V1239.16H923.93V1320.7ZM923.14 1320.7V1239.16H925.06V1320.7ZM924.26 1320.7V1057.51H926.18V1320.7ZM925.38 1320.7V1057.51H927.3V1320.7ZM926.5 1320.7V1178.61H928.42V1320.7ZM927.62 1320.7V1249.26H929.54V1320.7ZM928.74 1320.7V1249.26H930.66V1320.7ZM929.87 1320.7V1239.16H931.79V1320.7ZM930.99 1320.7V1239.16H932.91V1320.7ZM932.11 1320.7V1239.16H934.03V1320.7ZM933.23 1320.7V1229.07H935.15V1320.7ZM934.35 1320.7V946.5H936.27V1320.7ZM935.47 1320.7V966.68H937.39V1320.7ZM936.59 1320.7V966.68H938.51V1320.7ZM937.72 1320.7V1178.61H939.64V1320.7ZM938.84 1320.7V1249.26H940.76V1320.7ZM939.96 1320.7V1249.26H941.88V1320.7ZM941.08 1320.7V1239.16H943V1320.7ZM942.2 1320.7V1239.16H944.12V1320.7ZM943.32 1320.7V1249.26H945.24V1320.7ZM944.45 1320.7V1249.26H946.37V1320.7ZM945.57 1320.7V1249.26H947.49V1320.7ZM946.69 1320.7V1249.26H948.61V1320.7ZM947.81 1320.7V1259.35H949.73V1320.7ZM948.93 1320.7V1249.26H950.85V1320.7ZM950.05 1320.7V1249.26H951.97V1320.7ZM951.17 1320.7V1259.35H953.09V1320.7ZM952.3 1320.7V1259.35H954.22V1320.7ZM953.42 1320.7V1259.35H955.34V1320.7ZM954.54 1320.7V1259.35H956.46V1320.7ZM955.66 1320.7V1249.26H957.58V1320.7ZM956.78 1320.7V1249.26H958.7V1320.7ZM957.9 1320.7V1269.44H959.82V1320.7ZM959.03 1320.7V1259.35H960.95V1320.7ZM960.15 1320.7V1259.35H962.07V1320.7ZM961.27 1320.7V1249.26H963.19V1320.7ZM962.39 1320.7V1249.26H964.31V1320.7ZM963.51 1320.7V1259.35H965.43V1320.7ZM964.63 1320.7V1259.35H966.55V1320.7ZM965.75 1320.7V1249.26H967.67V1320.7ZM966.88 1320.7V1249.26H968.8V1320.7ZM968 1320.7V1249.26H969.92V1320.7ZM969.12 1320.7V1249.26H971.04V1320.7ZM970.24 1320.7V1249.26H972.16V1320.7ZM971.36 1320.7V1208.89H973.28V1320.7ZM972.48 1320.7V966.68H974.4V1320.7ZM973.61 1320.7V1027.23H975.53V1320.7ZM974.73 1320.7V946.5H976.65V1320.7ZM975.85 1320.7V1188.7H977.77V1320.7ZM976.97 1320.7V1188.7H978.89V1320.7ZM978.09 1320.7V1279.53H980.01V1320.7ZM979.21 1320.7V1188.7H981.13V1320.7ZM980.33 1320.7V1007.05H982.25V1320.7ZM981.46 1320.7V1007.05H983.38V1320.7ZM982.58 1320.7V1128.15H984.5V1320.7ZM983.7 1320.7V1259.35H985.62V1320.7ZM984.82 1320.7V1118.06H986.74V1320.7ZM985.94 1320.7V1007.05H987.86V1320.7ZM987.06 1320.7V936.4H988.98V1320.7ZM988.19 1320.7V1208.89H990.11V1320.7ZM989.31 1320.7V1178.61H991.23V1320.7ZM990.43 1320.7V1178.61H992.35V1320.7ZM991.55 1320.7V1259.35H993.47V1320.7ZM992.67 1320.7V1269.44H994.59V1320.7ZM993.79 1320.7V1259.35H995.71V1320.7ZM994.91 1320.7V1269.44H996.83V1320.7ZM996.04 1320.7V1017.14H997.96V1320.7ZM997.16 1320.7V1017.14H999.08V1320.7ZM998.28 1320.7V1279.53H1000.2V1320.7ZM999.4 1320.7V1259.35H1001.32V1320.7ZM1000.52 1320.7V1269.44H1002.44V1320.7ZM1001.64 1320.7V1269.44H1003.56V1320.7ZM1002.76 1320.7V1269.44H1004.68V1320.7ZM1003.89 1320.7V1188.7H1005.81V1320.7ZM1005.01 1320.7V1188.7H1006.93V1320.7ZM1006.13 1320.7V1178.61H1008.05V1320.7ZM1007.25 1320.7V1178.61H1009.17V1320.7ZM1008.37 1320.7V1259.35H1010.29V1320.7ZM1009.49 1320.7V1218.98H1011.41V1320.7ZM1010.62 1320.7V1218.98H1012.54V1320.7ZM1011.74 1320.7V1239.16H1013.66V1320.7ZM1012.86 1320.7V1259.35H1014.78V1320.7ZM1013.98 1320.7V1269.44H1015.9V1320.7ZM1015.1 1320.7V1259.35H1017.02V1320.7ZM1016.22 1320.7V1269.44H1018.14V1320.7ZM1017.34 1320.7V1279.53H1019.26V1320.7ZM1018.47 1320.7V1269.44H1020.39V1320.7ZM1019.59 1320.7V1279.53H1021.51V1320.7ZM1020.71 1320.7V1269.44H1022.63V1320.7ZM1021.83 1320.7V1269.44H1023.75V1320.7ZM1022.95 1320.7V1239.16H1024.87V1320.7ZM1024.07 1320.7V1239.16H1025.99V1320.7ZM1025.2 1320.7V1249.26H1027.12V1320.7ZM1026.32 1320.7V1249.26H1028.24V1320.7ZM1027.44 1320.7V1259.35H1029.36V1320.7ZM1028.56 1320.7V1259.35H1030.48V1320.7ZM1204.64 1320.7V1259.35H1206.56V1320.7ZM1205.76 1320.7V1269.44H1207.68V1320.7ZM1206.88 1320.7V1259.35H1208.8V1320.7ZM1208 1320.7V1259.35H1209.92V1320.7ZM1209.13 1320.7V1269.44H1211.05V1320.7ZM1210.25 1320.7V1259.35H1212.17V1320.7ZM1211.37 1320.7V1269.44H1213.29V1320.7ZM1212.49 1320.7V1259.35H1214.41V1320.7ZM1213.61 1320.7V1269.44H1215.53V1320.7ZM1214.73 1320.7V1259.35H1216.65V1320.7ZM1215.86 1320.7V1269.44H1217.78V1320.7ZM1216.98 1320.7V1259.35H1218.9V1320.7ZM1218.1 1320.7V1269.44H1220.02V1320.7ZM1219.22 1320.7V1259.35H1221.14V1320.7ZM1220.34 1320.7V1158.43H1222.26V1320.7ZM1221.46 1320.7V1198.8H1223.38V1320.7ZM1222.58 1320.7V1208.89H1224.5V1320.7ZM1223.71 1320.7V1249.26H1225.63V1320.7ZM1224.83 1320.7V1249.26H1226.75V1320.7ZM1225.95 1320.7V1249.26H1227.87V1320.7ZM1227.07 1320.7V1249.26H1228.99V1320.7ZM1228.19 1320.7V1249.26H1230.11V1320.7ZM1229.31 1320.7V1249.26H1231.23V1320.7ZM1230.44 1320.7V1259.35H1232.36V1320.7ZM1231.56 1320.7V1249.26H1233.48V1320.7ZM1232.68 1320.7V1259.35H1234.6V1320.7ZM1233.8 1320.7V1249.26H1235.72V1320.7ZM1234.92 1320.7V1249.26H1236.84V1320.7ZM1236.04 1320.7V1259.35H1237.96V1320.7ZM1237.16 1320.7V1249.26H1239.08V1320.7ZM1238.29 1320.7V1239.16H1240.21V1320.7ZM1239.41 1320.7V1239.16H1241.33V1320.7ZM1240.53 1320.7V1138.24H1242.45V1320.7ZM1241.65 1320.7V1239.16H1243.57V1320.7ZM1242.77 1320.7V1239.16H1244.69V1320.7ZM1243.89 1320.7V1239.16H1245.81V1320.7ZM1245.01 1320.7V1249.26H1246.93V1320.7ZM1246.14 1320.7V1249.26H1248.06V1320.7ZM1247.26 1320.7V1249.26H1249.18V1320.7ZM1248.38 1320.7V1249.26H1250.3V1320.7ZM1249.5 1320.7V1188.7H1251.42V1320.7ZM1250.62 1320.7V1249.26H1252.54V1320.7ZM1251.74 1320.7V1249.26H1253.66V1320.7ZM1252.87 1320.7V1259.35H1254.79V1320.7ZM1253.99 1320.7V1259.35H1255.91V1320.7ZM1255.11 1320.7V1269.44H1257.03V1320.7ZM1256.23 1320.7V1259.35H1258.15V1320.7ZM1257.35 1320.7V1259.35H1259.27V1320.7ZM1258.47 1320.7V1259.35H1260.39V1320.7ZM1259.59 1320.7V1259.35H1261.51V1320.7ZM1260.72 1320.7V1259.35H1262.64V1320.7ZM1261.84 1320.7V1118.06H1263.76V1320.7ZM1262.96 1320.7V1077.69H1264.88V1320.7ZM1264.08 1320.7V1188.7H1266V1320.7ZM1265.2 1320.7V1259.35H1267.12V1320.7ZM1266.32 1320.7V1259.35H1268.24V1320.7ZM1267.45 1320.7V1259.35H1269.37V1320.7ZM1268.57 1320.7V1259.35H1270.49V1320.7ZM1269.69 1320.7V1218.98H1271.61V1320.7ZM1270.81 1320.7V1269.44H1272.73V1320.7ZM1271.93 1320.7V1269.44H1273.85V1320.7ZM1273.05 1320.7V1269.44H1274.97V1320.7ZM1274.17 1320.7V1259.35H1276.09V1320.7ZM1275.3 1320.7V1259.35H1277.22V1320.7ZM1276.42 1320.7V1229.07H1278.34V1320.7ZM1277.54 1320.7V1229.07H1279.46V1320.7ZM1278.66 1320.7V1229.07H1280.58V1320.7ZM1279.78 1320.7V1229.07H1281.7V1320.7ZM1280.9 1320.7V1218.98H1282.82V1320.7ZM1282.03 1320.7V1259.35H1283.95V1320.7ZM1283.15 1320.7V1259.35H1285.07V1320.7ZM1284.27 1320.7V1259.35H1286.19V1320.7ZM1285.39 1320.7V1259.35H1287.31V1320.7ZM1286.51 1320.7V1259.35H1288.43V1320.7ZM1287.63 1320.7V1269.44H1289.55V1320.7ZM1288.75 1320.7V1269.44H1290.67V1320.7ZM1289.88 1320.7V1269.44H1291.8V1320.7ZM1291 1320.7V1269.44H1292.92V1320.7ZM1292.12 1320.7V1269.44H1294.04V1320.7ZM1293.24 1320.7V1269.44H1295.16V1320.7ZM1294.36 1320.7V1269.44H1296.28V1320.7ZM1295.48 1320.7V1269.44H1297.4V1320.7ZM1296.61 1320.7V1259.35H1298.53V1320.7ZM1297.73 1320.7V1259.35H1299.65V1320.7ZM1298.85 1320.7V1259.35H1300.77V1320.7ZM1299.97 1320.7V1269.44H1301.89V1320.7ZM1301.09 1320.7V1269.44H1303.01V1320.7ZM1302.21 1320.7V1208.89H1304.13V1320.7ZM1303.33 1320.7V1208.89H1305.25V1320.7ZM1304.46 1320.7V1178.61H1306.38V1320.7ZM1305.58 1320.7V1148.34H1307.5V1320.7ZM1306.7 1320.7V1218.98H1308.62V1320.7ZM1307.82 1320.7V1218.98H1309.74V1320.7ZM1308.94 1320.7V1239.16H1310.86V1320.7ZM1310.06 1320.7V1249.26H1311.98V1320.7ZM1311.19 1320.7V1289.62H1313.11V1320.7ZM1312.31 1320.7V1269.44H1314.23V1320.7ZM1313.43 1320.7V1289.62H1315.35V1320.7ZM1314.55 1320.7V1259.35H1316.47V1320.7ZM1315.67 1320.7V1269.44H1317.59V1320.7ZM1316.79 1320.7V1269.44H1318.71V1320.7ZM1317.91 1320.7V1279.53H1319.83V1320.7ZM1319.04 1320.7V1279.53H1320.96V1320.7ZM1320.16 1320.7V1279.53H1322.08V1320.7ZM1321.28 1320.7V1279.53H1323.2V1320.7ZM1322.4 1320.7V1269.44H1324.32V1320.7ZM1323.52 1320.7V1269.44H1325.44V1320.7ZM1324.64 1320.7V1269.44H1326.56V1320.7ZM1325.76 1320.7V1269.44H1327.68V1320.7ZM1326.89 1320.7V1208.89H1328.81V1320.7ZM1328.01 1320.7V1249.26H1329.93V1320.7ZM1329.13 1320.7V1269.44H1331.05V1320.7ZM1330.25 1320.7V1269.44H1332.17V1320.7ZM1331.37 1320.7V1229.07H1333.29V1320.7ZM1332.49 1320.7V1239.16H1334.41V1320.7ZM1333.62 1320.7V1239.16H1335.54V1320.7ZM1334.74 1320.7V1279.53H1336.66V1320.7ZM1335.86 1320.7V1279.53H1337.78V1320.7ZM1336.98 1320.7V1259.35H1338.9V1320.7ZM1338.1 1320.7V1259.35H1340.02V1320.7ZM1339.22 1320.7V1259.35H1341.14V1320.7ZM1340.34 1320.7V1269.44H1342.26V1320.7ZM1341.47 1320.7V1269.44H1343.39V1320.7ZM1342.59 1320.7V1249.26H1344.51V1320.7ZM1343.71 1320.7V1249.26H1345.63V1320.7ZM1344.83 1320.7V1249.26H1346.75V1320.7ZM1345.95 1320.7V1249.26H1347.87V1320.7ZM1347.07 1320.7V1249.26H1348.99V1320.7ZM1348.2 1320.7V1249.26H1350.12V1320.7ZM1349.32 1320.7V1229.07H1351.24V1320.7ZM1350.44 1320.7V1229.07H1352.36V1320.7ZM1351.56 1320.7V1229.07H1353.48V1320.7ZM1527.64 1320.7V1239.16H1529.56V1320.7ZM1528.76 1320.7V1239.16H1530.68V1320.7ZM1529.88 1320.7V1239.16H1531.8V1320.7ZM1531 1320.7V1168.52H1532.92V1320.7ZM1532.13 1320.7V1107.97H1534.05V1320.7ZM1533.25 1320.7V1107.97H1535.17V1320.7ZM1534.37 1320.7V986.86H1536.29V1320.7ZM1535.49 1320.7V986.86H1537.41V1320.7ZM1536.61 1320.7V986.86H1538.53V1320.7ZM1537.73 1320.7V1107.97H1539.65V1320.7ZM1538.86 1320.7V946.5H1540.78V1320.7ZM1539.98 1320.7V1118.06H1541.9V1320.7ZM1541.1 1320.7V1229.07H1543.02V1320.7ZM1542.22 1320.7V1239.16H1544.14V1320.7ZM1543.34 1320.7V1239.16H1545.26V1320.7ZM1544.46 1320.7V1239.16H1546.38V1320.7ZM1545.58 1320.7V1239.16H1547.5V1320.7ZM1546.71 1320.7V1229.07H1548.63V1320.7ZM1547.83 1320.7V1239.16H1549.75V1320.7ZM1548.95 1320.7V1239.16H1550.87V1320.7ZM1550.07 1320.7V1229.07H1551.99V1320.7ZM1551.19 1320.7V1218.98H1553.11V1320.7ZM1552.31 1320.7V1218.98H1554.23V1320.7ZM1553.44 1320.7V1198.8H1555.36V1320.7ZM1554.56 1320.7V1128.15H1556.48V1320.7ZM1555.68 1320.7V1097.88H1557.6V1320.7ZM1556.8 1320.7V1198.8H1558.72V1320.7ZM1557.92 1320.7V1198.8H1559.84V1320.7ZM1559.04 1320.7V1158.43H1560.96V1320.7ZM1560.16 1320.7V1198.8H1562.08V1320.7ZM1561.29 1320.7V1218.98H1563.21V1320.7ZM1562.41 1320.7V1218.98H1564.33V1320.7ZM1563.53 1320.7V1229.07H1565.45V1320.7ZM1564.65 1320.7V1229.07H1566.57V1320.7ZM1565.77 1320.7V1198.8H1567.69V1320.7ZM1566.89 1320.7V1178.61H1568.81V1320.7ZM1568.01 1320.7V1168.52H1569.93V1320.7ZM1569.14 1320.7V1249.26H1571.06V1320.7ZM1570.26 1320.7V1249.26H1572.18V1320.7ZM1571.38 1320.7V1249.26H1573.3V1320.7ZM1572.5 1320.7V1249.26H1574.42V1320.7ZM1573.62 1320.7V1218.98H1575.54V1320.7ZM1574.74 1320.7V1218.98H1576.66V1320.7ZM1575.87 1320.7V1208.89H1577.79V1320.7ZM1576.99 1320.7V1128.15H1578.91V1320.7ZM1578.11 1320.7V1239.16H1580.03V1320.7ZM1579.23 1320.7V1218.98H1581.15V1320.7ZM1580.35 1320.7V1218.98H1582.27V1320.7ZM1581.47 1320.7V1218.98H1583.39V1320.7ZM1582.59 1320.7V1218.98H1584.51V1320.7ZM1583.72 1320.7V1218.98H1585.64V1320.7ZM1584.84 1320.7V1208.89H1586.76V1320.7ZM1585.96 1320.7V1138.24H1587.88V1320.7ZM1587.08 1320.7V1148.34H1589V1320.7ZM1588.2 1320.7V1229.07H1590.12V1320.7ZM1589.32 1320.7V1239.16H1591.24V1320.7ZM1590.45 1320.7V1229.07H1592.37V1320.7ZM1591.57 1320.7V1239.16H1593.49V1320.7ZM1592.69 1320.7V1229.07H1594.61V1320.7ZM1593.81 1320.7V1198.8H1595.73V1320.7ZM1594.93 1320.7V1178.61H1596.85V1320.7ZM1596.05 1320.7V1249.26H1597.97V1320.7ZM1597.17 1320.7V1249.26H1599.09V1320.7ZM1598.3 1320.7V1249.26H1600.22V1320.7ZM1599.42 1320.7V1249.26H1601.34V1320.7ZM1600.54 1320.7V1249.26H1602.46V1320.7ZM1601.66 1320.7V1249.26H1603.58V1320.7ZM1602.78 1320.7V1259.35H1604.7V1320.7ZM1603.9 1320.7V1198.8H1605.82V1320.7ZM1605.03 1320.7V1198.8H1606.95V1320.7ZM1606.15 1320.7V1239.16H1608.07V1320.7ZM1607.27 1320.7V1198.8H1609.19V1320.7ZM1608.39 1320.7V1239.16H1610.31V1320.7ZM1609.51 1320.7V1239.16H1611.43V1320.7ZM1610.63 1320.7V1208.89H1612.55V1320.7ZM1611.75 1320.7V1249.26H1613.67V1320.7ZM1612.88 1320.7V1249.26H1614.8V1320.7ZM1614 1320.7V1249.26H1615.92V1320.7ZM1615.12 1320.7V1269.44H1617.04V1320.7ZM1616.24 1320.7V1259.35H1618.16V1320.7ZM1617.36 1320.7V1269.44H1619.28V1320.7ZM1618.48 1320.7V1249.26H1620.4V1320.7ZM1619.61 1320.7V1249.26H1621.53V1320.7ZM1620.73 1320.7V1249.26H1622.65V1320.7ZM1621.85 1320.7V1249.26H1623.77V1320.7ZM1622.97 1320.7V1229.07H1624.89V1320.7ZM1624.09 1320.7V1198.8H1626.01V1320.7ZM1625.21 1320.7V1198.8H1627.13V1320.7ZM1626.33 1320.7V865.76H1628.25V1320.7ZM1627.46 1320.7V1017.14H1629.38V1320.7ZM1628.58 1320.7V1158.43H1630.5V1320.7ZM1629.7 1320.7V1158.43H1631.62V1320.7ZM1630.82 1320.7V1138.24H1632.74V1320.7ZM1631.94 1320.7V1138.24H1633.86V1320.7ZM1633.06 1320.7V1239.16H1634.98V1320.7ZM1634.19 1320.7V1259.35H1636.11V1320.7ZM1635.31 1320.7V1259.35H1637.23V1320.7ZM1636.43 1320.7V1249.26H1638.35V1320.7ZM1637.55 1320.7V1198.8H1639.47V1320.7ZM1638.67 1320.7V1007.05H1640.59V1320.7ZM1639.79 1320.7V1007.05H1641.71V1320.7ZM1640.91 1320.7V1027.23H1642.83V1320.7ZM1642.04 1320.7V1198.8H1643.96V1320.7ZM1643.16 1320.7V1249.26H1645.08V1320.7ZM1644.28 1320.7V1249.26H1646.2V1320.7ZM1645.4 1320.7V1269.44H1647.32V1320.7ZM1646.52 1320.7V1249.26H1648.44V1320.7ZM1647.64 1320.7V1249.26H1649.56V1320.7ZM1648.76 1320.7V1269.44H1650.68V1320.7ZM1649.89 1320.7V1269.44H1651.81V1320.7ZM1651.01 1320.7V1259.35H1652.93V1320.7ZM1652.13 1320.7V1259.35H1654.05V1320.7ZM1653.25 1320.7V1259.35H1655.17V1320.7ZM1654.37 1320.7V1259.35H1656.29V1320.7ZM1655.49 1320.7V1198.8H1657.41V1320.7ZM1656.62 1320.7V1229.07H1658.54V1320.7ZM1657.74 1320.7V1229.07H1659.66V1320.7ZM1658.86 1320.7V1249.26H1660.78V1320.7ZM1659.98 1320.7V1249.26H1661.9V1320.7ZM1661.1 1320.7V1259.35H1663.02V1320.7ZM1662.22 1320.7V1259.35H1664.14V1320.7ZM1663.34 1320.7V1259.35H1665.26V1320.7ZM1664.47 1320.7V1259.35H1666.39V1320.7ZM1665.59 1320.7V1269.44H1667.51V1320.7ZM1666.71 1320.7V1279.53H1668.63V1320.7ZM1667.83 1320.7V1269.44H1669.75V1320.7ZM1668.95 1320.7V1279.53H1670.87V1320.7ZM1670.07 1320.7V1269.44H1671.99V1320.7ZM1671.2 1320.7V1269.44H1673.12V1320.7ZM1672.32 1320.7V1269.44H1674.24V1320.7ZM1673.44 1320.7V1279.53H1675.36V1320.7ZM1674.56 1320.7V1269.44H1676.48V1320.7ZM1850.64 1320.7V1249.26H1852.56V1320.7ZM1851.76 1320.7V1249.26H1853.68V1320.7ZM1852.88 1320.7V1239.16H1854.8V1320.7ZM1854 1320.7V1239.16H1855.92V1320.7ZM1855.13 1320.7V1249.26H1857.05V1320.7ZM1856.25 1320.7V1249.26H1858.17V1320.7ZM1857.37 1320.7V1249.26H1859.29V1320.7ZM1858.49 1320.7V1249.26H1860.41V1320.7ZM1859.61 1320.7V1249.26H1861.53V1320.7ZM1860.73 1320.7V1259.35H1862.65V1320.7ZM1861.86 1320.7V1259.35H1863.78V1320.7ZM1862.98 1320.7V1259.35H1864.9V1320.7ZM1864.1 1320.7V1249.26H1866.02V1320.7ZM1865.22 1320.7V1198.8H1867.14V1320.7ZM1866.34 1320.7V1148.34H1868.26V1320.7ZM1867.46 1320.7V946.5H1869.38V1320.7ZM1868.58 1320.7V1027.23H1870.5V1320.7ZM1869.71 1320.7V1198.8H1871.63V1320.7ZM1870.83 1320.7V1229.07H1872.75V1320.7ZM1871.95 1320.7V1229.07H1873.87V1320.7ZM1873.07 1320.7V1229.07H1874.99V1320.7ZM1874.19 1320.7V1249.26H1876.11V1320.7ZM1875.31 1320.7V1249.26H1877.23V1320.7ZM1876.44 1320.7V1229.07H1878.36V1320.7ZM1877.56 1320.7V1229.07H1879.48V1320.7ZM1878.68 1320.7V1229.07H1880.6V1320.7ZM1879.8 1320.7V1229.07H1881.72V1320.7ZM1880.92 1320.7V1229.07H1882.84V1320.7ZM1882.04 1320.7V1218.98H1883.96V1320.7ZM1883.16 1320.7V1218.98H1885.08V1320.7ZM1884.29 1320.7V1218.98H1886.21V1320.7ZM1885.41 1320.7V1218.98H1887.33V1320.7ZM1886.53 1320.7V1218.98H1888.45V1320.7ZM1887.65 1320.7V1218.98H1889.57V1320.7ZM1888.77 1320.7V1198.8H1890.69V1320.7ZM1889.89 1320.7V1178.61H1891.81V1320.7ZM1891.01 1320.7V1239.16H1892.93V1320.7ZM1892.14 1320.7V1239.16H1894.06V1320.7ZM1893.26 1320.7V1239.16H1895.18V1320.7ZM1894.38 1320.7V1259.35H1896.3V1320.7ZM1895.5 1320.7V1259.35H1897.42V1320.7ZM1896.62 1320.7V1239.16H1898.54V1320.7ZM1897.74 1320.7V1239.16H1899.66V1320.7ZM1898.87 1320.7V1208.89H1900.79V1320.7ZM1899.99 1320.7V976.77H1901.91V1320.7ZM1901.11 1320.7V1138.24H1903.03V1320.7ZM1902.23 1320.7V1148.34H1904.15V1320.7ZM1903.35 1320.7V1188.7H1905.27V1320.7ZM1904.47 1320.7V1188.7H1906.39V1320.7ZM1905.59 1320.7V1118.06H1907.51V1320.7ZM1906.72 1320.7V996.96H1908.64V1320.7ZM1907.84 1320.7V1037.32H1909.76V1320.7ZM1908.96 1320.7V1118.06H1910.88V1320.7ZM1910.08 1320.7V1229.07H1912V1320.7ZM1911.2 1320.7V1249.26H1913.12V1320.7ZM1912.32 1320.7V1249.26H1914.24V1320.7ZM1913.45 1320.7V1239.16H1915.37V1320.7ZM1914.57 1320.7V1239.16H1916.49V1320.7ZM1915.69 1320.7V1239.16H1917.61V1320.7ZM1916.81 1320.7V1168.52H1918.73V1320.7ZM1917.93 1320.7V1229.07H1919.85V1320.7ZM1919.05 1320.7V1229.07H1920.97V1320.7ZM1920.17 1320.7V1229.07H1922.09V1320.7ZM1921.3 1320.7V1249.26H1923.22V1320.7ZM1922.42 1320.7V1249.26H1924.34V1320.7ZM1923.54 1320.7V1178.61H1925.46V1320.7ZM1924.66 1320.7V1138.24H1926.58V1320.7ZM1925.78 1320.7V1198.8H1927.7V1320.7ZM1926.9 1320.7V1198.8H1928.82V1320.7ZM1928.03 1320.7V1229.07H1929.95V1320.7ZM1929.15 1320.7V1229.07H1931.07V1320.7ZM1930.27 1320.7V1239.16H1932.19V1320.7ZM1931.39 1320.7V1239.16H1933.31V1320.7ZM1932.51 1320.7V1249.26H1934.43V1320.7ZM1933.63 1320.7V1249.26H1935.55V1320.7ZM1934.75 1320.7V1249.26H1936.67V1320.7ZM1935.88 1320.7V1259.35H1937.8V1320.7ZM1937 1320.7V1259.35H1938.92V1320.7ZM1938.12 1320.7V1259.35H1940.04V1320.7ZM1939.24 1320.7V1249.26H1941.16V1320.7ZM1940.36 1320.7V1259.35H1942.28V1320.7ZM1941.48 1320.7V1259.35H1943.4V1320.7ZM1942.61 1320.7V1259.35H1944.53V1320.7ZM1943.73 1320.7V1259.35H1945.65V1320.7ZM1944.85 1320.7V1259.35H1946.77V1320.7ZM1945.97 1320.7V1249.26H1947.89V1320.7ZM1947.09 1320.7V1259.35H1949.01V1320.7ZM1948.21 1320.7V1249.26H1950.13V1320.7ZM1949.33 1320.7V1259.35H1951.25V1320.7ZM1950.46 1320.7V1188.7H1952.38V1320.7ZM1951.58 1320.7V1198.8H1953.5V1320.7ZM1952.7 1320.7V1168.52H1954.62V1320.7ZM1953.82 1320.7V1198.8H1955.74V1320.7ZM1954.94 1320.7V1188.7H1956.86V1320.7ZM1956.06 1320.7V1128.15H1957.98V1320.7ZM1957.19 1320.7V1017.14H1959.11V1320.7ZM1958.31 1320.7V1027.23H1960.23V1320.7ZM1959.43 1320.7V1128.15H1961.35V1320.7ZM1960.55 1320.7V1077.69H1962.47V1320.7ZM1961.67 1320.7V1158.43H1963.59V1320.7ZM1962.79 1320.7V1249.26H1964.71V1320.7ZM1963.91 1320.7V1249.26H1965.83V1320.7ZM1965.04 1320.7V1249.26H1966.96V1320.7ZM1966.16 1320.7V1148.34H1968.08V1320.7ZM1967.28 1320.7V1017.14H1969.2V1320.7ZM1968.4 1320.7V936.4H1970.32V1320.7ZM1969.52 1320.7V1158.43H1971.44V1320.7ZM1970.64 1320.7V1259.35H1972.56V1320.7ZM1971.76 1320.7V1249.26H1973.68V1320.7ZM1972.89 1320.7V1249.26H1974.81V1320.7ZM1974.01 1320.7V1259.35H1975.93V1320.7ZM1975.13 1320.7V1249.26H1977.05V1320.7ZM1976.25 1320.7V1249.26H1978.17V1320.7ZM1977.37 1320.7V1249.26H1979.29V1320.7ZM1978.49 1320.7V1249.26H1980.41V1320.7ZM1979.62 1320.7V1249.26H1981.54V1320.7ZM1980.74 1320.7V1249.26H1982.66V1320.7ZM1981.86 1320.7V1249.26H1983.78V1320.7ZM1982.98 1320.7V1239.16H1984.9V1320.7ZM1984.1 1320.7V1239.16H1986.02V1320.7ZM1985.22 1320.7V1208.89H1987.14V1320.7ZM1986.34 1320.7V1148.34H1988.26V1320.7ZM1987.47 1320.7V1198.8H1989.39V1320.7ZM1988.59 1320.7V1208.89H1990.51V1320.7ZM1989.71 1320.7V1239.16H1991.63V1320.7ZM1990.83 1320.7V1239.16H1992.75V1320.7ZM1991.95 1320.7V1218.98H1993.87V1320.7ZM1993.07 1320.7V1218.98H1994.99V1320.7ZM1994.2 1320.7V1249.26H1996.12V1320.7ZM1995.32 1320.7V1249.26H1997.24V1320.7ZM1996.44 1320.7V1249.26H1998.36V1320.7ZM1997.56 1320.7V1249.26H1999.48V1320.7ZM2173.64 1320.7V1269.44H2175.56V1320.7ZM2174.76 1320.7V1249.26H2176.68V1320.7ZM2175.88 1320.7V1269.44H2177.8V1320.7ZM2177 1320.7V1269.44H2178.92V1320.7ZM2178.13 1320.7V1259.35H2180.05V1320.7ZM2179.25 1320.7V1259.35H2181.17V1320.7ZM2180.37 1320.7V1269.44H2182.29V1320.7ZM2181.49 1320.7V1208.89H2183.41V1320.7ZM2182.61 1320.7V1249.26H2184.53V1320.7ZM2183.73 1320.7V1239.16H2185.65V1320.7ZM2184.86 1320.7V1249.26H2186.78V1320.7ZM2185.98 1320.7V1259.35H2187.9V1320.7ZM2187.1 1320.7V1259.35H2189.02V1320.7ZM2188.22 1320.7V1239.16H2190.14V1320.7ZM2189.34 1320.7V1249.26H2191.26V1320.7ZM2190.46 1320.7V1249.26H2192.38V1320.7ZM2191.58 1320.7V1249.26H2193.5V1320.7ZM2192.71 1320.7V1218.98H2194.63V1320.7ZM2193.83 1320.7V996.96H2195.75V1320.7ZM2194.95 1320.7V1138.24H2196.87V1320.7ZM2196.07 1320.7V986.86H2197.99V1320.7ZM2197.19 1320.7V1168.52H2199.11V1320.7ZM2198.31 1320.7V1249.26H2200.23V1320.7ZM2199.44 1320.7V1249.26H2201.36V1320.7ZM2200.56 1320.7V1259.35H2202.48V1320.7ZM2201.68 1320.7V1249.26H2203.6V1320.7ZM2202.8 1320.7V1249.26H2204.72V1320.7ZM2203.92 1320.7V1249.26H2205.84V1320.7ZM2205.04 1320.7V1249.26H2206.96V1320.7ZM2206.16 1320.7V1269.44H2208.08V1320.7ZM2207.29 1320.7V1249.26H2209.21V1320.7ZM2208.41 1320.7V1249.26H2210.33V1320.7ZM2209.53 1320.7V1249.26H2211.45V1320.7ZM2210.65 1320.7V1259.35H2212.57V1320.7ZM2211.77 1320.7V1269.44H2213.69V1320.7ZM2212.89 1320.7V1259.35H2214.81V1320.7ZM2214.01 1320.7V1269.44H2215.93V1320.7ZM2215.14 1320.7V1259.35H2217.06V1320.7ZM2216.26 1320.7V1218.98H2218.18V1320.7ZM2217.38 1320.7V1168.52H2219.3V1320.7ZM2218.5 1320.7V1218.98H2220.42V1320.7ZM2219.62 1320.7V1279.53H2221.54V1320.7ZM2220.74 1320.7V1269.44H2222.66V1320.7ZM2221.87 1320.7V1269.44H2223.79V1320.7ZM2222.99 1320.7V1208.89H2224.91V1320.7ZM2224.11 1320.7V1178.61H2226.03V1320.7ZM2225.23 1320.7V1259.35H2227.15V1320.7ZM2226.35 1320.7V1259.35H2228.27V1320.7ZM2227.47 1320.7V1259.35H2229.39V1320.7ZM2228.59 1320.7V1249.26H2230.51V1320.7ZM2229.72 1320.7V1138.24H2231.64V1320.7ZM2230.84 1320.7V1218.98H2232.76V1320.7ZM2231.96 1320.7V1239.16H2233.88V1320.7ZM2233.08 1320.7V1229.07H2235V1320.7ZM2234.2 1320.7V1229.07H2236.12V1320.7ZM2235.32 1320.7V1107.97H2237.24V1320.7ZM2236.45 1320.7V1077.69H2238.37V1320.7ZM2237.57 1320.7V1097.88H2239.49V1320.7ZM2238.69 1320.7V1077.69H2240.61V1320.7ZM2239.81 1320.7V1198.8H2241.73V1320.7ZM2240.93 1320.7V1239.16H2242.85V1320.7ZM2242.05 1320.7V1269.44H2243.97V1320.7ZM2243.17 1320.7V1279.53H2245.09V1320.7ZM2244.3 1320.7V1279.53H2246.22V1320.7ZM2245.42 1320.7V1279.53H2247.34V1320.7ZM2246.54 1320.7V1269.44H2248.46V1320.7ZM2247.66 1320.7V1168.52H2249.58V1320.7ZM2248.78 1320.7V1249.26H2250.7V1320.7ZM2249.9 1320.7V1279.53H2251.82V1320.7ZM2251.03 1320.7V1279.53H2252.95V1320.7ZM2252.15 1320.7V1279.53H2254.07V1320.7ZM2253.27 1320.7V1289.62H2255.19V1320.7ZM2254.39 1320.7V1279.53H2256.31V1320.7ZM2255.51 1320.7V1279.53H2257.43V1320.7ZM2256.63 1320.7V1299.72H2258.55V1320.7ZM2257.75 1320.7V1279.53H2259.67V1320.7ZM2258.88 1320.7V1279.53H2260.8V1320.7ZM2260 1320.7V1289.62H2261.92V1320.7ZM2261.12 1320.7V1279.53H2263.04V1320.7ZM2262.24 1320.7V1279.53H2264.16V1320.7ZM2263.36 1320.7V1289.62H2265.28V1320.7ZM2264.48 1320.7V1279.53H2266.4V1320.7ZM2265.61 1320.7V1289.62H2267.53V1320.7ZM2266.73 1320.7V1279.53H2268.65V1320.7ZM2267.85 1320.7V1289.62H2269.77V1320.7ZM2268.97 1320.7V1289.62H2270.89V1320.7ZM2270.09 1320.7V1279.53H2272.01V1320.7ZM2271.21 1320.7V1239.16H2273.13V1320.7ZM2272.33 1320.7V1289.62H2274.25V1320.7ZM2273.46 1320.7V1259.35H2275.38V1320.7ZM2274.58 1320.7V1198.8H2276.5V1320.7ZM2275.7 1320.7V1249.26H2277.62V1320.7ZM2276.82 1320.7V1107.97H2278.74V1320.7ZM2277.94 1320.7V1037.32H2279.86V1320.7ZM2279.06 1320.7V1118.06H2280.98V1320.7ZM2280.19 1320.7V1259.35H2282.11V1320.7ZM2281.31 1320.7V1249.26H2283.23V1320.7ZM2282.43 1320.7V1249.26H2284.35V1320.7ZM2283.55 1320.7V1239.16H2285.47V1320.7ZM2284.67 1320.7V1249.26H2286.59V1320.7ZM2285.79 1320.7V1259.35H2287.71V1320.7ZM2286.91 1320.7V1239.16H2288.83V1320.7ZM2288.04 1320.7V1269.44H2289.96V1320.7ZM2289.16 1320.7V1289.62H2291.08V1320.7ZM2290.28 1320.7V1269.44H2292.2V1320.7ZM2291.4 1320.7V1269.44H2293.32V1320.7ZM2292.52 1320.7V1269.44H2294.44V1320.7ZM2293.64 1320.7V1218.98H2295.56V1320.7ZM2294.76 1320.7V1269.44H2296.68V1320.7ZM2295.89 1320.7V1269.44H2297.81V1320.7ZM2297.01 1320.7V1229.07H2298.93V1320.7ZM2298.13 1320.7V1208.89H2300.05V1320.7ZM2299.25 1320.7V1269.44H2301.17V1320.7ZM2300.37 1320.7V1279.53H2302.29V1320.7ZM2301.49 1320.7V1279.53H2303.41V1320.7ZM2302.62 1320.7V1269.44H2304.54V1320.7ZM2303.74 1320.7V1289.62H2305.66V1320.7ZM2304.86 1320.7V1269.44H2306.78V1320.7ZM2305.98 1320.7V1269.44H2307.9V1320.7ZM2307.1 1320.7V1239.16H2309.02V1320.7ZM2308.22 1320.7V1259.35H2310.14V1320.7ZM2309.34 1320.7V1269.44H2311.26V1320.7ZM2310.47 1320.7V1259.35H2312.39V1320.7ZM2311.59 1320.7V1289.62H2313.51V1320.7ZM2312.71 1320.7V1279.53H2314.63V1320.7ZM2313.83 1320.7V1279.53H2315.75V1320.7ZM2314.95 1320.7V1279.53H2316.87V1320.7ZM2316.07 1320.7V1279.53H2317.99V1320.7ZM2317.2 1320.7V1279.53H2319.12V1320.7ZM2318.32 1320.7V1269.44H2320.24V1320.7ZM2319.44 1320.7V1269.44H2321.36V1320.7ZM2320.56 1320.7V1279.53H2322.48V1320.7Z" fill="#238f70"/>
<path d="M144 815.5H155.5M144 865.5H155.5M144 916.5H155.5M144 966.5H155.5M144 1017.5H155.5M144 1067.5H155.5M144 1118.5H155.5M144 1168.5H155.5M144 1218.5H155.5M144 1269.5H155.5M144 1319.5H155.5M155.5 1321.4V1332.2M478.5 1321.4V1332.2M801.5 1321.4V1332.2M1124.5 1321.4V1332.2M1447.5 1321.4V1332.2M1770.5 1321.4V1332.2M2093.5 1321.4V1332.2M2416.5 1321.4V1332.2" stroke="#a0a0a0" stroke-width="1" fill="none"/>
<path d="M156.1 1321.2H2416.5" stroke="#6a6a6a" stroke-width="1.25" fill="none"/>
<path d="M2416.9 817.3V1321.5" stroke="#a8a8a8" stroke-width=".9" fill="none"/>
<path d="M154.9 814.9V1320.2" stroke="#636363" stroke-width="1.6" fill="none"/>
<g id="banner">
<rect x="176.7" y="49.1" width="481.4" height="77.4" fill="#090818"/>
<g fill="none" stroke="url(#eco)" stroke-width="6.9" stroke-linecap="round" stroke-linejoin="round">
<path d="M199.4 75.2L204.8 72.8" stroke="#02f0c9"/>
<path d="M193.2 95.6H210.9C211.6 88.5 207.6 83 201.8 83C196.3 83 192.6 88 192.6 94.6C192.6 101.4 196.6 106.2 202.4 106.2C206 106.2 208.6 105 210.6 103"/>
<path d="M238.2 87.2C236.4 84.4 233.6 83 230.4 83C224.8 83 220.9 88 220.9 94.6C220.9 101.2 224.8 106.2 230.4 106.2C233.8 106.2 236.6 104.6 238.4 101.8"/>
<ellipse cx="257.2" cy="94.6" rx="10.1" ry="11.6"/>
</g>
<g fill="none" stroke="#fff" stroke-width="6.9" stroke-linecap="round" stroke-linejoin="round">
<path d="M274.4 84.6L282.4 106.6L291 82L299.4 106.6L314 68.2"/>
<path d="M317.4 86.4C320 84 323 83 326.4 83C332.6 83 336 86.6 336 92.6V106.4"/>
<path d="M336 100C336 103.700 331.400 106.500 325.400 106.500C319.400 106.500 315.700 104.100 315.700 100.200C315.700 96.300 319.400 93.900 325.400 93.900H336"/>
<path d="M346.8 73.6V100.4C346.8 104.4 348.8 106.2 353.4 106"/>
<path d="M341.2 82.2H354.6"/>
<path d="M361.4 73.6V100.4C361.4 104.4 363.4 106.2 369.6 106"/>
<path d="M355.8 82.2H372.6"/>
</g>
<ellipse cx="433.8" cy="89.1" rx="25.9" ry="28" fill="#03b3e1"/>
<g fill="none" stroke="#fff" stroke-width="1.9" stroke-linecap="round" stroke-linejoin="round">
<path d="M419.6 96.2V80.6H425C428.2 80.6 430 82.2 430 84.8C430 87.4 428.2 89 425 89H419.6M425.6 89L430.4 96.2"/>
<path d="M434.6 82.6V93.2C434.6 95.4 435.6 96.4 438 96.2"/>
<path d="M427 87.2H438.4"/>
<path d="M440.6 91H449.8C449.8 87.4 447.8 85.6 445.2 85.6C442.4 85.6 440.4 87.8 440.4 91C440.4 94.2 442.4 96.4 445.4 96.4C447.2 96.4 448.6 95.8 449.6 94.6"/>
<path d="M427.4 96.4H450.2" stroke-width="1.5"/>
</g>
<g font-family="Liberation Sans, sans-serif" font-size="11.5" fill="#0e98cd" stroke="#0e98cd" stroke-width=".3" letter-spacing="-.12">
<text x="468.4" y="79.2">Le réseau</text>
<text x="468.4" y="92.4">de transport</text>
<text x="468.4" y="105.5">d’électricité</text>
</g>
<rect x="546.7" y="61.1" width="100.4" height="55.9" fill="#fff"/>
<rect x="553" y="68.8" width="7.8" height="6.5" fill="#2b3a8c"/>
<rect x="560.8" y="68.8" width="3" height="6.5" fill="#f4f4f8"/>
<rect x="563.6" y="68.8" width="7.9" height="6.5" fill="#e1101f"/>
<g font-family="Liberation Sans, sans-serif" font-weight="bold" font-size="7.5" fill="#26262b" letter-spacing="-.1">
<text x="552.8" y="84.9" textLength="43.5" lengthAdjust="spacingAndGlyphs">RÉPUBLIQUE</text>
<text x="552.8" y="93.1" textLength="41" lengthAdjust="spacingAndGlyphs">FRANÇAISE</text>
</g>
<g font-family="Liberation Sans, sans-serif" font-style="italic" font-size="3.6" fill="#6e6e74">
<text x="553" y="99.8">Liberté</text><text x="553" y="104.6">Égalité</text><text x="553" y="109.5">Fraternité</text>
</g>
<rect x="606.6" y="66.3" width="35.4" height="45.2" fill="#fff" stroke="#6d8fd0" stroke-width="1"/>
<rect x="608.2" y="67.9" width="32.2" height="42" fill="none" stroke="#b9c9ea" stroke-width=".6"/>
<text x="624.3" y="74.9" text-anchor="middle" font-family="Liberation Sans, sans-serif" font-weight="bold" font-size="6.3" fill="#e8242e" letter-spacing=".7">ADEME</text>
<circle cx="624.3" cy="87" r="8.9" fill="#2d52b8"/>
<path d="M619.6 81.4c1.6-1 3.4-.4 4.4.8c1 1.4.2 2.8-1 3.6c-1.2.8-.8 2.2.4 2.8c1.4.8 1.2 2.6 0 3.8c-.8.8-2.2.6-2.6-.6c-.6-1.4-2-2-2.6-3.400c-.6-1.6-.4-4.800 1.400-7zM627 80c1.800.4 3.400 1.600 4.400 3.200c-.8 1-2 .8-2.800 0c-.8-.8-1.800-1.600-1.600-3.200zM628.800 88.200c1.200-.4 2.400.2 2.600 1.400c.2 1.400-.8 2.800-2 3.400c-.8-.6-1.400-1.800-1.200-2.800c.1-.8.200-1.600.6-2z" fill="#7f9be0" opacity=".85"/>
<g font-family="Liberation Sans, sans-serif" font-weight="bold" font-size="2.6" fill="#e8242e" letter-spacing=".45" text-anchor="middle">
<text x="624.3" y="101.8">AGENCE DE LA</text><text x="624.3" y="105.4">TRANSITION</text><text x="624.3" y="109">ÉCOLOGIQUE</text>
</g>
</g>
<g id="jtable">
<path d="M169.3 135.7H661.1V258.9H169.3ZM172.6 139.1H289.2V189.2H172.6ZM172.6 194.9H289.2V253.1H172.6ZM294.7 139.1H411.5V189.2H294.7ZM294.7 194.9H411.5V253.1H294.7ZM416.9 139.1H532.8V189.2H416.9ZM416.9 194.9H532.8V253.1H416.9ZM538.5 139.1H655.3V189.2H538.5ZM538.5 194.9H655.3V253.1H538.5Z" fill="#dcdcdc" fill-rule="evenodd"/>
<rect x="171.95" y="138.45" width="117.89999999999999" height="51.39999999999999" fill="none" stroke="#e8e8e8" stroke-width="1.3"/>
<rect x="171.95" y="194.25" width="117.89999999999999" height="59.499999999999986" fill="none" stroke="#e8e8e8" stroke-width="1.3"/>
<rect x="294.05" y="138.45" width="118.10000000000001" height="51.39999999999999" fill="none" stroke="#e8e8e8" stroke-width="1.3"/>
<rect x="294.05" y="194.25" width="118.10000000000001" height="59.499999999999986" fill="none" stroke="#e8e8e8" stroke-width="1.3"/>
<rect x="416.25" y="138.45" width="117.19999999999997" height="51.39999999999999" fill="none" stroke="#e8e8e8" stroke-width="1.3"/>
<rect x="416.25" y="194.25" width="117.19999999999997" height="59.499999999999986" fill="none" stroke="#e8e8e8" stroke-width="1.3"/>
<rect x="537.85" y="138.45" width="118.09999999999995" height="51.39999999999999" fill="none" stroke="#e8e8e8" stroke-width="1.3"/>
<rect x="537.85" y="194.25" width="118.09999999999995" height="59.499999999999986" fill="none" stroke="#e8e8e8" stroke-width="1.3"/>
<text x="221.1" y="174.8" font-family="Liberation Sans, sans-serif" font-size="34" fill="#0a0a0a" stroke="#0a0a0a" stroke-width=".4" textLength="20.6" lengthAdjust="spacingAndGlyphs">J</text>
<text x="312.09999999999997" y="174.8" font-family="Liberation Sans, sans-serif" font-size="34" fill="#0a0a0a" stroke="#0a0a0a" stroke-width=".4" textLength="20.6" lengthAdjust="spacingAndGlyphs">J</text>
<path d="M346.59999999999997 163.4H361.8M354.2 155.8V171" stroke="#111" stroke-width="2" fill="none"/>
<text x="386.2" y="174.7" text-anchor="middle" font-family="Liberation Sans, sans-serif" font-size="32.5" font-weight="normal" fill="#0a0a0a">1</text>
<text x="433.3" y="174.8" font-family="Liberation Sans, sans-serif" font-size="34" fill="#0a0a0a" stroke="#0a0a0a" stroke-width=".4" textLength="20.6" lengthAdjust="spacingAndGlyphs">J</text>
<path d="M468.79999999999995 163.4H484.0M476.4 155.8V171" stroke="#111" stroke-width="2" fill="none"/>
<text x="508.9" y="174.7" text-anchor="middle" font-family="Liberation Sans, sans-serif" font-size="32.5" font-weight="bold" fill="#0a0a0a">2</text>
<text x="555.5" y="174.8" font-family="Liberation Sans, sans-serif" font-size="34" fill="#0a0a0a" stroke="#0a0a0a" stroke-width=".4" textLength="20.6" lengthAdjust="spacingAndGlyphs">J</text>
<path d="M590.4 163.4H605.6M598 155.8V171" stroke="#111" stroke-width="2" fill="none"/>
<text x="631.1" y="174.7" text-anchor="middle" font-family="Liberation Sans, sans-serif" font-size="32.5" font-weight="bold" fill="#0a0a0a">3</text>
<g transform="translate(180.1 194.9)" clip-path="url(#cw)">
<rect width="106" height="55" fill="url(#wave)"/>
<path d="M15.500 0Q75 44.500 106 15.500V0Z" fill="#01efca"/>
<path d="M28.500 0Q73 21.500 106 4V0Z" fill="#00a287"/>
</g>
<g transform="translate(301.9 196.2)" clip-path="url(#cw)">
<rect width="106" height="55" fill="url(#wave)"/>
<path d="M15.500 0Q75 44.500 106 15.500V0Z" fill="#01efca"/>
<path d="M28.500 0Q73 21.500 106 4V0Z" fill="#00a287"/>
</g>
<g transform="translate(424.1 196.2)" clip-path="url(#cw)">
<rect width="106" height="55" fill="url(#wave)"/>
<path d="M15.500 0Q75 44.500 106 15.500V0Z" fill="#01efca"/>
<path d="M28.500 0Q73 21.500 106 4V0Z" fill="#00a287"/>
</g>
<g transform="translate(544.2 196.2)" clip-path="url(#cw)">
<rect width="106" height="55" fill="url(#wave)"/>
<path d="M15.500 0Q75 44.500 106 15.500V0Z" fill="#01efca"/>
<path d="M28.500 0Q73 21.500 106 4V0Z" fill="#00a287"/>
</g>
</g>
<g id="g2e-logo">
<rect x="2321.5" y="1322.5" width="116.3" height="56.7" fill="#fff"/>
<g transform="translate(-.2 1.1)">
<path d="M2360.400 1341.300A12.300 12.300 0 1 0 2361.300 1351.500H2350.800" fill="none" stroke="#0b6fb8" stroke-width="5.600" stroke-linecap="round" stroke-linejoin="round"/>
<path d="M2370.200 1346.200C2370.400 1342.600 2373 1340.700 2376.500 1340.700C2380.300 1340.700 2382.800 1343 2382.800 1346.200C2382.800 1349 2381.200 1350.900 2378.400 1353.600L2372.600 1360.600H2385.800" fill="none" stroke="#0b6fb8" stroke-width="5.200" stroke-linejoin="bevel"/>
</g>
<path d="M2392 1324.800L2383.800 1338L2391 1340.600L2389.500 1363.200L2400.200 1338.600L2393.400 1336.200Z" fill="#ea5a25"/>
<path d="M2404.200 1338.900H2424.500L2419.300 1345H2400.800Z" fill="#f29120"/>
<path d="M2400 1348.100H2418.500L2413.100 1354.300H2396.600Z" fill="#f29120"/>
<path d="M2395.600 1357.200H2416.800L2411.100 1363.300H2392.400Z" fill="#f29120"/>
<text x="2393.900" y="1334.900" font-family="Liberation Sans, sans-serif" font-weight="bold" font-size="8.2" fill="#ea5a25" stroke="#ea5a25" stroke-width=".25" textLength="30" lengthAdjust="spacingAndGlyphs">FRANCE</text>
<text x="2340" y="1368.300" font-family="Liberation Sans, sans-serif" font-size="3.500" fill="#2d7fc4" textLength="74" lengthAdjust="spacingAndGlyphs">Optimisation des ressources énergétiques</text>
</g>
</svg>
<div class="t" style="left:131.3px;transform:translate(-100%,-50%) scaleX(1.1);transform-origin:100% 50%;top:68.8px;font-size:18.4px;color:#454545;font-weight:normal;-webkit-text-stroke:.25px #454545;">35</div>
<div class="t" style="left:131.3px;transform:translate(-100%,-50%) scaleX(1.1);transform-origin:100% 50%;top:154.91px;font-size:18.4px;color:#454545;font-weight:normal;-webkit-text-stroke:.25px #454545;">30</div>
<div class="t" style="left:131.3px;transform:translate(-100%,-50%) scaleX(1.1);transform-origin:100% 50%;top:241.03px;font-size:18.4px;color:#454545;font-weight:normal;-webkit-text-stroke:.25px #454545;">25</div>
<div class="t" style="left:131.3px;transform:translate(-100%,-50%) scaleX(1.1);transform-origin:100% 50%;top:327.14px;font-size:18.4px;color:#454545;font-weight:normal;-webkit-text-stroke:.25px #454545;">20</div>
<div class="t" style="left:131.3px;transform:translate(-100%,-50%) scaleX(1.1);transform-origin:100% 50%;top:413.26px;font-size:18.4px;color:#454545;font-weight:normal;-webkit-text-stroke:.25px #454545;">15</div>
<div class="t" style="left:131.3px;transform:translate(-100%,-50%) scaleX(1.1);transform-origin:100% 50%;top:499.37px;font-size:18.4px;color:#454545;font-weight:normal;-webkit-text-stroke:.25px #454545;">10</div>
<div class="t" style="left:131.3px;transform:translate(-100%,-50%) scaleX(1.1);transform-origin:100% 50%;top:585.49px;font-size:18.4px;color:#454545;font-weight:normal;-webkit-text-stroke:.25px #454545;">5</div>
<div class="t" style="left:131.3px;transform:translate(-100%,-50%) scaleX(1.1);transform-origin:100% 50%;top:671.6px;font-size:18.4px;color:#454545;font-weight:normal;-webkit-text-stroke:.25px #454545;">0</div>
<div class="t" style="left:153.3px;transform:translate(-50%,-50%) scaleX(1.11);top:700.8px;font-size:18.4px;color:#000;font-weight:normal;-webkit-text-stroke:.3px #000;">0h</div>
<div class="t" style="left:246.97px;transform:translate(-50%,-50%) scaleX(1.11);top:700.8px;font-size:18.4px;color:#000;font-weight:normal;-webkit-text-stroke:.3px #000;">1h</div>
<div class="t" style="left:340.63px;transform:translate(-50%,-50%) scaleX(1.11);top:700.8px;font-size:18.4px;color:#000;font-weight:normal;-webkit-text-stroke:.3px #000;">2h</div>
<div class="t" style="left:434.3px;transform:translate(-50%,-50%) scaleX(1.11);top:700.8px;font-size:18.4px;color:#000;font-weight:normal;-webkit-text-stroke:.3px #000;">3h</div>
<div class="t" style="left:527.97px;transform:translate(-50%,-50%) scaleX(1.11);top:700.8px;font-size:18.4px;color:#000;font-weight:normal;-webkit-text-stroke:.3px #000;">4h</div>
<div class="t" style="left:621.63px;transform:translate(-50%,-50%) scaleX(1.11);top:700.8px;font-size:18.4px;color:#000;font-weight:normal;-webkit-text-stroke:.3px #000;">5h</div>
<div class="t" style="left:715.3px;transform:translate(-50%,-50%) scaleX(1.11);top:700.8px;font-size:18.4px;color:#000;font-weight:normal;-webkit-text-stroke:.3px #000;">6h</div>
<div class="t" style="left:808.97px;transform:translate(-50%,-50%) scaleX(1.11);top:700.8px;font-size:18.4px;color:#000;font-weight:normal;-webkit-text-stroke:.3px #000;">7h</div>
<div class="t" style="left:902.63px;transform:translate(-50%,-50%) scaleX(1.11);top:700.8px;font-size:18.4px;color:#000;font-weight:normal;-webkit-text-stroke:.3px #000;">8h</div>
<div class="t" style="left:996.3px;transform:translate(-50%,-50%) scaleX(1.11);top:700.8px;font-size:18.4px;color:#000;font-weight:normal;-webkit-text-stroke:.3px #000;">9h</div>
<div class="t" style="left:1089.97px;transform:translate(-50%,-50%) scaleX(1.11);top:700.8px;font-size:18.4px;color:#000;font-weight:normal;-webkit-text-stroke:.3px #000;">10h</div>
<div class="t" style="left:1183.63px;transform:translate(-50%,-50%) scaleX(1.11);top:700.8px;font-size:18.4px;color:#000;font-weight:normal;-webkit-text-stroke:.3px #000;">11h</div>
<div class="t" style="left:1277.3px;transform:translate(-50%,-50%) scaleX(1.11);top:700.8px;font-size:18.4px;color:#000;font-weight:normal;-webkit-text-stroke:.3px #000;">12h</div>
<div class="t" style="left:1370.97px;transform:translate(-50%,-50%) scaleX(1.11);top:700.8px;font-size:18.4px;color:#000;font-weight:normal;-webkit-text-stroke:.3px #000;">13h</div>
<div class="t" style="left:1464.63px;transform:translate(-50%,-50%) scaleX(1.11);top:700.8px;font-size:18.4px;color:#000;font-weight:normal;-webkit-text-stroke:.3px #000;">14h</div>
<div class="t" style="left:1558.3px;transform:translate(-50%,-50%) scaleX(1.11);top:700.8px;font-size:18.4px;color:#000;font-weight:normal;-webkit-text-stroke:.3px #000;">15h</div>
<div class="t" style="left:1651.97px;transform:translate(-50%,-50%) scaleX(1.11);top:700.8px;font-size:18.4px;color:#000;font-weight:normal;-webkit-text-stroke:.3px #000;">16h</div>
<div class="t" style="left:1745.63px;transform:translate(-50%,-50%) scaleX(1.11);top:700.8px;font-size:18.4px;color:#000;font-weight:normal;-webkit-text-stroke:.3px #000;">17h</div>
<div class="t" style="left:1839.3px;transform:translate(-50%,-50%) scaleX(1.11);top:700.8px;font-size:18.4px;color:#000;font-weight:normal;-webkit-text-stroke:.3px #000;">18h</div>
<div class="t" style="left:1932.97px;transform:translate(-50%,-50%) scaleX(1.11);top:700.8px;font-size:18.4px;color:#000;font-weight:normal;-webkit-text-stroke:.3px #000;">19h</div>
<div class="t" style="left:2026.63px;transform:translate(-50%,-50%) scaleX(1.11);top:700.8px;font-size:18.4px;color:#000;font-weight:normal;-webkit-text-stroke:.3px #000;">20h</div>
<div class="t" style="left:2120.3px;transform:translate(-50%,-50%) scaleX(1.11);top:700.8px;font-size:18.4px;color:#000;font-weight:normal;-webkit-text-stroke:.3px #000;">21h</div>
<div class="t" style="left:2213.97px;transform:translate(-50%,-50%) scaleX(1.11);top:700.8px;font-size:18.4px;color:#000;font-weight:normal;-webkit-text-stroke:.3px #000;">22h</div>
<div class="t" style="left:2307.63px;transform:translate(-50%,-50%) scaleX(1.11);top:700.8px;font-size:18.4px;color:#000;font-weight:normal;-webkit-text-stroke:.3px #000;">23h</div>
<div class="t" style="left:2401.3px;transform:translate(-50%,-50%) scaleX(1.11);top:700.8px;font-size:18.4px;color:#000;font-weight:normal;-webkit-text-stroke:.3px #000;">0h</div>
<div class="t" style="left:79.6px;top:370.5px;font-size:23.5px;color:#4c4c4c;transform:translate(-50%,-50%) rotate(-90deg) scaleX(.89)">kW</div>
<div class="t" style="left:79.6px;top:1067.5px;font-size:23.5px;color:#4c4c4c;transform:translate(-50%,-50%) rotate(-90deg) scaleX(.89)">kW</div>
<div class="t" style="left:132.8px;transform:translate(-100%,-50%) scaleX(1.06);transform-origin:100% 50%;top:814.2px;font-size:20.8px;color:#454545;font-weight:normal;-webkit-text-stroke:.25px #454545;">50</div>
<div class="t" style="left:132.8px;transform:translate(-100%,-50%) scaleX(1.06);transform-origin:100% 50%;top:864.66px;font-size:20.8px;color:#454545;font-weight:normal;-webkit-text-stroke:.25px #454545;">45</div>
<div class="t" style="left:132.8px;transform:translate(-100%,-50%) scaleX(1.06);transform-origin:100% 50%;top:915.12px;font-size:20.8px;color:#454545;font-weight:normal;-webkit-text-stroke:.25px #454545;">40</div>
<div class="t" style="left:132.8px;transform:translate(-100%,-50%) scaleX(1.06);transform-origin:100% 50%;top:965.58px;font-size:20.8px;color:#454545;font-weight:normal;-webkit-text-stroke:.25px #454545;">35</div>
<div class="t" style="left:132.8px;transform:translate(-100%,-50%) scaleX(1.06);transform-origin:100% 50%;top:1016.04px;font-size:20.8px;color:#454545;font-weight:normal;-webkit-text-stroke:.25px #454545;">30</div>
<div class="t" style="left:132.8px;transform:translate(-100%,-50%) scaleX(1.06);transform-origin:100% 50%;top:1066.5px;font-size:20.8px;color:#454545;font-weight:normal;-webkit-text-stroke:.25px #454545;">25</div>
<div class="t" style="left:132.8px;transform:translate(-100%,-50%) scaleX(1.06);transform-origin:100% 50%;top:1116.96px;font-size:20.8px;color:#454545;font-weight:normal;-webkit-text-stroke:.25px #454545;">20</div>
<div class="t" style="left:132.8px;transform:translate(-100%,-50%) scaleX(1.06);transform-origin:100% 50%;top:1167.42px;font-size:20.8px;color:#454545;font-weight:normal;-webkit-text-stroke:.25px #454545;">15</div>
<div class="t" style="left:132.8px;transform:translate(-100%,-50%) scaleX(1.06);transform-origin:100% 50%;top:1217.88px;font-size:20.8px;color:#454545;font-weight:normal;-webkit-text-stroke:.25px #454545;">10</div>
<div class="t" style="left:132.8px;transform:translate(-100%,-50%) scaleX(1.06);transform-origin:100% 50%;top:1268.34px;font-size:20.8px;color:#454545;font-weight:normal;-webkit-text-stroke:.25px #454545;">5</div>
<div class="t" style="left:132.8px;transform:translate(-100%,-50%) scaleX(1.06);transform-origin:100% 50%;top:1318.8px;font-size:20.8px;color:#454545;font-weight:normal;-webkit-text-stroke:.25px #454545;">0</div>
<div class="t" style="left:155.8px;transform:translate(-50%,-50%) scaleX(1.175);top:1351.2px;font-size:19.5px;color:#000;font-weight:normal;-webkit-text-stroke:.3px #000;">sam. 24</div>
<div class="t" style="left:478.8px;transform:translate(-50%,-50%) scaleX(1.175);top:1351.2px;font-size:19.5px;color:#000;font-weight:normal;-webkit-text-stroke:.3px #000;">dim. 25</div>
<div class="t" style="left:801.8px;transform:translate(-50%,-50%) scaleX(1.175);top:1351.2px;font-size:19.5px;color:#000;font-weight:normal;-webkit-text-stroke:.3px #000;">lun. 26</div>
<div class="t" style="left:1124.8px;transform:translate(-50%,-50%) scaleX(1.175);top:1351.2px;font-size:19.5px;color:#000;font-weight:normal;-webkit-text-stroke:.3px #000;">mar. 27</div>
<div class="t" style="left:1447.8px;transform:translate(-50%,-50%) scaleX(1.175);top:1351.2px;font-size:19.5px;color:#000;font-weight:normal;-webkit-text-stroke:.3px #000;">mer. 28</div>
<div class="t" style="left:1770.8px;transform:translate(-50%,-50%) scaleX(1.175);top:1351.2px;font-size:19.5px;color:#000;font-weight:normal;-webkit-text-stroke:.3px #000;">jeu. 29</div>
<div class="t" style="left:2093.8px;transform:translate(-50%,-50%) scaleX(1.175);top:1351.2px;font-size:19.5px;color:#000;font-weight:normal;-webkit-text-stroke:.3px #000;">ven. 30</div>
<div id="title"><span>LHB-site-L747</span></div>
<div class="box" style="left:1990px;top:105.7px"><span>Consommation: 141 kWh</span></div>
<div class="box" style="left:1990px;top:175.7px"><span>P Max :&nbsp; 33 kW</span></div>
<div class="box" style="left:1990px;top:245.7px"><span>P min : 2 kW</span></div>
<div id="date"><span>vendredi 30 janvier 2026</span></div>
<div class="box" style="left:559.9px;top:803.8px"><span>Consommation: 1 061 kWh</span></div>
<div class="box" style="left:1097.6px;top:803.8px"><span>P Max :&nbsp; 45 kW</span></div>
<div class="box" style="left:1607.8px;top:803.8px"><span>P min : 2 kW</span></div>
<div id="edge-r"></div><div id="edge-b"></div>
</body></html>
